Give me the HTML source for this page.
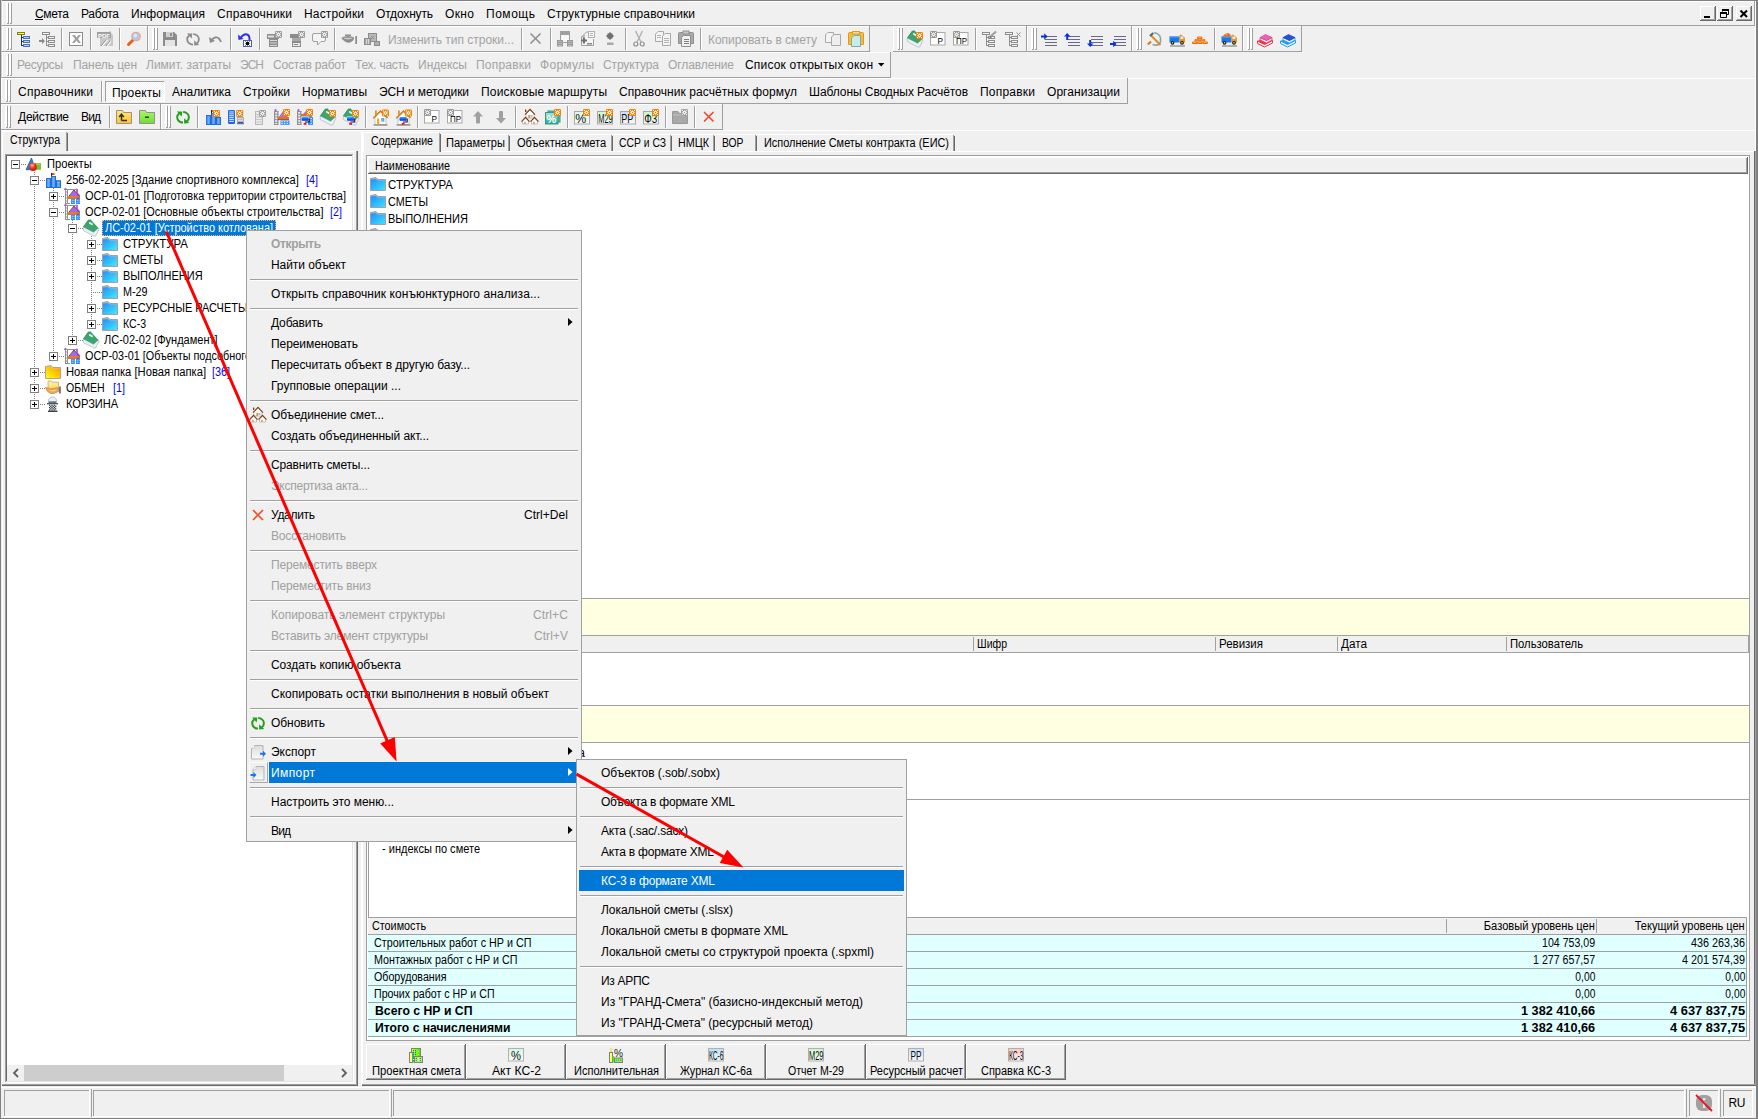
<!DOCTYPE html>
<html><head><meta charset="utf-8"><title>Smeta</title>
<style>
html,body{margin:0;padding:0;}
body{width:1758px;height:1119px;overflow:hidden;background:#f0f0f0;position:relative;font-family:"Liberation Sans",sans-serif;}
div{position:absolute;box-sizing:border-box;}
.t{white-space:nowrap;}
svg{position:absolute;overflow:visible;}
</style></head><body>
<div style="left:0px;top:0px;width:1758px;height:1px;background:#808080;"></div>
<div style="left:0px;top:0px;width:1px;height:1119px;background:#808080;"></div>
<div style="left:1px;top:0px;width:1px;height:78px;background:#cccccc;"></div>
<div style="left:2px;top:25px;width:1753px;height:1px;background:#a0a0a0;"></div>
<div style="left:2px;top:1px;width:1753px;height:1px;background:#ffffff;"></div>
<div style="left:2px;top:1px;width:1px;height:25px;background:#ffffff;"></div>
<div style="left:2px;top:25px;width:1753px;height:1px;background:#a0a0a0;"></div>
<div style="left:1754px;top:1px;width:1px;height:25px;background:#a0a0a0;"></div>
<div style="left:2px;top:26px;width:146px;height:1px;background:#ffffff;"></div>
<div style="left:2px;top:26px;width:1px;height:26px;background:#ffffff;"></div>
<div style="left:2px;top:51px;width:146px;height:1px;background:#a0a0a0;"></div>
<div style="left:147px;top:26px;width:1px;height:26px;background:#a0a0a0;"></div>
<div style="left:148px;top:26px;width:722px;height:1px;background:#ffffff;"></div>
<div style="left:148px;top:26px;width:1px;height:26px;background:#ffffff;"></div>
<div style="left:148px;top:51px;width:722px;height:1px;background:#a0a0a0;"></div>
<div style="left:869px;top:26px;width:1px;height:26px;background:#a0a0a0;"></div>
<div style="left:893px;top:26px;width:134px;height:1px;background:#ffffff;"></div>
<div style="left:893px;top:26px;width:1px;height:26px;background:#ffffff;"></div>
<div style="left:893px;top:51px;width:134px;height:1px;background:#a0a0a0;"></div>
<div style="left:1026px;top:26px;width:1px;height:26px;background:#a0a0a0;"></div>
<div style="left:1027px;top:26px;width:105px;height:1px;background:#ffffff;"></div>
<div style="left:1027px;top:26px;width:1px;height:26px;background:#ffffff;"></div>
<div style="left:1027px;top:51px;width:105px;height:1px;background:#a0a0a0;"></div>
<div style="left:1131px;top:26px;width:1px;height:26px;background:#a0a0a0;"></div>
<div style="left:1132px;top:26px;width:111px;height:1px;background:#ffffff;"></div>
<div style="left:1132px;top:26px;width:1px;height:26px;background:#ffffff;"></div>
<div style="left:1132px;top:51px;width:111px;height:1px;background:#a0a0a0;"></div>
<div style="left:1242px;top:26px;width:1px;height:26px;background:#a0a0a0;"></div>
<div style="left:1243px;top:26px;width:59px;height:1px;background:#ffffff;"></div>
<div style="left:1243px;top:26px;width:1px;height:26px;background:#ffffff;"></div>
<div style="left:1243px;top:51px;width:59px;height:1px;background:#a0a0a0;"></div>
<div style="left:1301px;top:26px;width:1px;height:26px;background:#a0a0a0;"></div>
<div style="left:2px;top:52px;width:889px;height:1px;background:#ffffff;"></div>
<div style="left:2px;top:52px;width:1px;height:26px;background:#ffffff;"></div>
<div style="left:2px;top:77px;width:889px;height:1px;background:#a0a0a0;"></div>
<div style="left:890px;top:52px;width:1px;height:26px;background:#a0a0a0;"></div>
<div style="left:1px;top:78px;width:1754px;height:1px;background:#ffffff;"></div>
<div style="left:1px;top:78px;width:1127px;height:1px;background:#ffffff;"></div>
<div style="left:1px;top:78px;width:1px;height:26px;background:#ffffff;"></div>
<div style="left:1px;top:103px;width:1127px;height:1px;background:#a0a0a0;"></div>
<div style="left:1127px;top:78px;width:1px;height:26px;background:#a0a0a0;"></div>
<div style="left:1px;top:104px;width:160px;height:1px;background:#ffffff;"></div>
<div style="left:1px;top:104px;width:1px;height:26px;background:#ffffff;"></div>
<div style="left:1px;top:129px;width:160px;height:1px;background:#a0a0a0;"></div>
<div style="left:160px;top:104px;width:1px;height:26px;background:#a0a0a0;"></div>
<div style="left:161px;top:104px;width:562px;height:1px;background:#ffffff;"></div>
<div style="left:161px;top:104px;width:1px;height:26px;background:#ffffff;"></div>
<div style="left:161px;top:129px;width:562px;height:1px;background:#a0a0a0;"></div>
<div style="left:722px;top:104px;width:1px;height:26px;background:#a0a0a0;"></div>
<div style="left:6px;top:3px;width:2px;height:21px;background:#ffffff;"></div>
<div style="left:8px;top:3px;width:1px;height:21px;background:#a0a0a0;"></div>
<div style="left:7px;top:23px;width:2px;height:1px;background:#a0a0a0;"></div>
<div style="left:9px;top:3px;width:2px;height:21px;background:#ffffff;"></div>
<div style="left:11px;top:3px;width:1px;height:21px;background:#a0a0a0;"></div>
<div style="left:10px;top:23px;width:2px;height:1px;background:#a0a0a0;"></div>
<div style="left:6px;top:28px;width:2px;height:22px;background:#ffffff;"></div>
<div style="left:8px;top:28px;width:1px;height:22px;background:#a0a0a0;"></div>
<div style="left:7px;top:49px;width:2px;height:1px;background:#a0a0a0;"></div>
<div style="left:9px;top:28px;width:2px;height:22px;background:#ffffff;"></div>
<div style="left:11px;top:28px;width:1px;height:22px;background:#a0a0a0;"></div>
<div style="left:10px;top:49px;width:2px;height:1px;background:#a0a0a0;"></div>
<div style="left:152px;top:28px;width:2px;height:22px;background:#ffffff;"></div>
<div style="left:154px;top:28px;width:1px;height:22px;background:#a0a0a0;"></div>
<div style="left:153px;top:49px;width:2px;height:1px;background:#a0a0a0;"></div>
<div style="left:155px;top:28px;width:2px;height:22px;background:#ffffff;"></div>
<div style="left:157px;top:28px;width:1px;height:22px;background:#a0a0a0;"></div>
<div style="left:156px;top:49px;width:2px;height:1px;background:#a0a0a0;"></div>
<div style="left:6px;top:54px;width:2px;height:22px;background:#ffffff;"></div>
<div style="left:8px;top:54px;width:1px;height:22px;background:#a0a0a0;"></div>
<div style="left:7px;top:75px;width:2px;height:1px;background:#a0a0a0;"></div>
<div style="left:9px;top:54px;width:2px;height:22px;background:#ffffff;"></div>
<div style="left:11px;top:54px;width:1px;height:22px;background:#a0a0a0;"></div>
<div style="left:10px;top:75px;width:2px;height:1px;background:#a0a0a0;"></div>
<div style="left:5px;top:80px;width:2px;height:22px;background:#ffffff;"></div>
<div style="left:7px;top:80px;width:1px;height:22px;background:#a0a0a0;"></div>
<div style="left:6px;top:101px;width:2px;height:1px;background:#a0a0a0;"></div>
<div style="left:8px;top:80px;width:2px;height:22px;background:#ffffff;"></div>
<div style="left:10px;top:80px;width:1px;height:22px;background:#a0a0a0;"></div>
<div style="left:9px;top:101px;width:2px;height:1px;background:#a0a0a0;"></div>
<div style="left:5px;top:106px;width:2px;height:22px;background:#ffffff;"></div>
<div style="left:7px;top:106px;width:1px;height:22px;background:#a0a0a0;"></div>
<div style="left:6px;top:127px;width:2px;height:1px;background:#a0a0a0;"></div>
<div style="left:8px;top:106px;width:2px;height:22px;background:#ffffff;"></div>
<div style="left:10px;top:106px;width:1px;height:22px;background:#a0a0a0;"></div>
<div style="left:9px;top:127px;width:2px;height:1px;background:#a0a0a0;"></div>
<div style="left:165px;top:106px;width:2px;height:22px;background:#ffffff;"></div>
<div style="left:167px;top:106px;width:1px;height:22px;background:#a0a0a0;"></div>
<div style="left:166px;top:127px;width:2px;height:1px;background:#a0a0a0;"></div>
<div style="left:168px;top:106px;width:2px;height:22px;background:#ffffff;"></div>
<div style="left:170px;top:106px;width:1px;height:22px;background:#a0a0a0;"></div>
<div style="left:169px;top:127px;width:2px;height:1px;background:#a0a0a0;"></div>
<div class="t" style="top:5.84px;font-size:12px;line-height:16px;color:#000;letter-spacing:-0.309px;left:35px;">Смета</div>
<div class="t" style="top:5.84px;font-size:12px;line-height:16px;color:#000;letter-spacing:-0.319px;left:81px;">Работа</div>
<div class="t" style="top:5.84px;font-size:12px;line-height:16px;color:#000;letter-spacing:0.059px;left:131px;">Информация</div>
<div class="t" style="top:5.84px;font-size:12px;line-height:16px;color:#000;letter-spacing:0.231px;left:217px;">Справочники</div>
<div class="t" style="top:5.84px;font-size:12px;line-height:16px;color:#000;letter-spacing:0.145px;left:304px;">Настройки</div>
<div class="t" style="top:5.84px;font-size:12px;line-height:16px;color:#000;letter-spacing:-0.168px;left:376px;">Отдохнуть</div>
<div class="t" style="top:5.84px;font-size:12px;line-height:16px;color:#000;letter-spacing:0.375px;left:445px;">Окно</div>
<div class="t" style="top:5.84px;font-size:12px;line-height:16px;color:#000;letter-spacing:0.531px;left:486px;">Помощь</div>
<div class="t" style="top:5.84px;font-size:12px;line-height:16px;color:#000;letter-spacing:0.112px;left:547px;">Структурные справочники</div>
<div style="left:35px;top:19px;width:8px;height:1px;background:#000;"></div>
<div class="t" style="top:56.84px;font-size:12px;line-height:16px;color:#a3a3a3;letter-spacing:-0.216px;left:17px;">Ресурсы</div>
<div class="t" style="top:56.84px;font-size:12px;line-height:16px;color:#a3a3a3;letter-spacing:-0.090px;left:73px;">Панель цен</div>
<div class="t" style="top:56.84px;font-size:12px;line-height:16px;color:#a3a3a3;letter-spacing:0.002px;left:146px;">Лимит. затраты</div>
<div class="t" style="top:56.84px;font-size:12px;line-height:16px;color:#a3a3a3;letter-spacing:-0.984px;left:240px;">ЭСН</div>
<div class="t" style="top:56.84px;font-size:12px;line-height:16px;color:#a3a3a3;letter-spacing:-0.200px;left:273px;">Состав работ</div>
<div class="t" style="top:56.84px;font-size:12px;line-height:16px;color:#a3a3a3;letter-spacing:-0.266px;left:355px;">Тех. часть</div>
<div class="t" style="top:56.84px;font-size:12px;line-height:16px;color:#a3a3a3;letter-spacing:0.010px;left:418px;">Индексы</div>
<div class="t" style="top:56.84px;font-size:12px;line-height:16px;color:#a3a3a3;letter-spacing:0.219px;left:476px;">Поправки</div>
<div class="t" style="top:56.84px;font-size:12px;line-height:16px;color:#a3a3a3;letter-spacing:0.297px;left:540px;">Формулы</div>
<div class="t" style="top:56.84px;font-size:12px;line-height:16px;color:#a3a3a3;letter-spacing:-0.117px;left:603px;">Структура</div>
<div class="t" style="top:56.84px;font-size:12px;line-height:16px;color:#a3a3a3;letter-spacing:-0.097px;left:668px;">Оглавление</div>
<div class="t" style="top:56.84px;font-size:12px;line-height:16px;color:#000;letter-spacing:0.183px;left:745px;">Список открытых окон</div>
<svg style="left:877.5px;top:63px" width="8" height="5" viewBox="0 0 8 5"><path d="M0 0 L6.4 0 L3.2 3.4 Z" fill="#000" stroke="none" stroke-width="1" /></svg>
<div style="left:105px;top:81px;width:60px;height:21px;background:repeating-conic-gradient(#ffffff 0 25%,#f0f0f0 0 50%) 0 0/2px 2px;border-top:1px solid #a0a0a0;border-left:1px solid #a0a0a0;border-right:1px solid #fff;border-bottom:1px solid #fff;"></div>
<div style="left:101px;top:81px;width:1px;height:21px;background:#a0a0a0;"></div>
<div style="left:102px;top:81px;width:1px;height:21px;background:#ffffff;"></div>
<div class="t" style="top:83.84px;font-size:12px;line-height:16px;color:#000;letter-spacing:0.231px;left:18px;">Справочники</div>
<div class="t" style="top:84.84px;font-size:12px;line-height:16px;color:#000;letter-spacing:0.141px;left:112px;">Проекты</div>
<div class="t" style="top:83.84px;font-size:12px;line-height:16px;color:#000;letter-spacing:-0.049px;left:172px;">Аналитика</div>
<div class="t" style="top:83.84px;font-size:12px;line-height:16px;color:#000;letter-spacing:0.138px;left:243px;">Стройки</div>
<div class="t" style="top:83.84px;font-size:12px;line-height:16px;color:#000;letter-spacing:0.141px;left:302px;">Нормативы</div>
<div class="t" style="top:83.84px;font-size:12px;line-height:16px;color:#000;letter-spacing:-0.099px;left:379px;">ЭСН и методики</div>
<div class="t" style="top:83.84px;font-size:12px;line-height:16px;color:#000;letter-spacing:0.180px;left:481px;">Поисковые маршруты</div>
<div class="t" style="top:83.84px;font-size:12px;line-height:16px;color:#000;letter-spacing:0.082px;left:619px;">Справочник расчётных формул</div>
<div class="t" style="top:83.84px;font-size:12px;line-height:16px;color:#000;letter-spacing:-0.077px;left:809px;">Шаблоны Сводных Расчётов</div>
<div class="t" style="top:83.84px;font-size:12px;line-height:16px;color:#000;letter-spacing:0.219px;left:980px;">Поправки</div>
<div class="t" style="top:83.84px;font-size:12px;line-height:16px;color:#000;letter-spacing:0.044px;left:1047px;">Организации</div>
<div class="t" style="top:108.84px;font-size:12px;line-height:16px;color:#000;letter-spacing:-0.250px;left:18px;">Действие</div>
<div class="t" style="top:108.84px;font-size:12px;line-height:16px;color:#000;letter-spacing:-0.852px;left:81px;">Вид</div>
<svg style="left:17px;top:32px" width="16" height="16" viewBox="0 0 16 16" shape-rendering="crispEdges"><rect x="0.5" y="0.5" width="7" height="2" fill="#ffff00" stroke="#808030" stroke-width="1"/><rect x="4" y="3" width="1" height="11" fill="#203060" /><rect x="5" y="5" width="1" height="1" fill="#203060" /><rect x="6.5" y="4.5" width="6" height="2" fill="#a8d0ff" stroke="#5070b0" stroke-width="1"/><rect x="5" y="9" width="1" height="1" fill="#203060" /><rect x="6.5" y="8.5" width="6" height="2" fill="#a8d0ff" stroke="#5070b0" stroke-width="1"/><rect x="5" y="13" width="1" height="1" fill="#203060" /><rect x="6.5" y="12.5" width="6" height="2" fill="#a8d0ff" stroke="#5070b0" stroke-width="1"/></svg>
<svg style="left:39px;top:32px" width="16" height="16" viewBox="0 0 16 16"><path d="M0 8 H3 V6 L6 9 L3 12 V10 H0 Z" fill="#8c8c8c" stroke="none" stroke-width="1" /><rect x="3.5" y="0.5" width="7" height="2" fill="#f4f4f4" stroke="#8c8c8c" stroke-width="1"/><rect x="7" y="3" width="1" height="11" fill="#8c8c8c" /><rect x="8" y="5" width="1" height="1" fill="#8c8c8c" /><rect x="9.5" y="4.5" width="6" height="2" fill="#f4f4f4" stroke="#8c8c8c" stroke-width="1"/><rect x="8" y="9" width="1" height="1" fill="#8c8c8c" /><rect x="9.5" y="8.5" width="6" height="2" fill="#f4f4f4" stroke="#8c8c8c" stroke-width="1"/><rect x="8" y="13" width="1" height="1" fill="#8c8c8c" /><rect x="9.5" y="12.5" width="6" height="2" fill="#f4f4f4" stroke="#8c8c8c" stroke-width="1"/></svg>
<div style="left:61px;top:28px;width:1px;height:22px;background:#a0a0a0;"></div>
<div style="left:62px;top:28px;width:1px;height:22px;background:#ffffff;"></div>
<svg style="left:69px;top:32px" width="16" height="16" viewBox="0 0 16 16"><rect x="0.5" y="0.5" width="13" height="13" fill="#fff" stroke="#8c8c8c" stroke-width="1"/><path d="M3 3 L6 3 L7.5 5.5 L9.5 3 L12 3 L9 7 L12 11 L9.5 11 L7.5 8.5 L5.5 11 L3 11 L6 7 Z" fill="#a0a0a0" stroke="none" stroke-width="1" /></svg>
<div style="left:90px;top:28px;width:1px;height:22px;background:#a0a0a0;"></div>
<div style="left:91px;top:28px;width:1px;height:22px;background:#ffffff;"></div>
<svg style="left:97px;top:31px" width="16" height="16" viewBox="0 0 16 16"><rect x="0" y="1" width="14" height="6" fill="#a0a0a0" /><path d="M14 1 L14 0 L12 0 L16 4 L16 15 L3 15 L3 7 L14 7 Z" fill="#c8c8c8" stroke="none" stroke-width="1" /><text x="1" y="6.5" font-family="Liberation Sans, sans-serif" font-size="6" fill="#fff" text-anchor="start" font-weight="bold" >PDF</text><path d="M4 15 L9 9 L11 9 L6 15 Z M9 15 L12 10 L14 10 L14 11 L11 15 Z" fill="#fff" stroke="none" stroke-width="1" /><path d="M4 15 L9 9 M9 15 L13 10" fill="none" stroke="#909090" stroke-width="1" /></svg>
<div style="left:119px;top:28px;width:1px;height:22px;background:#a0a0a0;"></div>
<div style="left:120px;top:28px;width:1px;height:22px;background:#ffffff;"></div>
<svg style="left:126px;top:31px" width="16" height="16" viewBox="0 0 16 16"><line x1="2.5" y1="13.5" x2="7" y2="9" stroke="#e0641a" stroke-width="3" stroke-linecap="round"/><circle cx="10" cy="5.5" r="4.2" fill="#b4c8f0" stroke="#eba58c" stroke-width="1.3"/><circle cx="9.3" cy="4.6" r="1.8" fill="#dce8ff" stroke="none" stroke-width="1"/></svg>
<svg style="left:163px;top:32px" width="16" height="16" viewBox="0 0 16 16"><path d="M0 0 H11 L14 3 V14 H0 Z" fill="#8c8c8c" stroke="none" stroke-width="1" /><rect x="3" y="0" width="7" height="5" fill="#d0d0d0" /><rect x="7" y="1" width="2" height="3" fill="#8c8c8c" /><rect x="2" y="8" width="10" height="6" fill="#e4e4e4" /></svg>
<svg style="left:186px;top:32.5px" width="14" height="13" viewBox="0 0 14 13"><path d="M7 11.6 C3.5 11.6 1.2 9 1.2 6.2 C1.2 4.6 2 3.2 3.4 2.2" fill="none" stroke="#8c8c8c" stroke-width="1.8" /><path d="M1 0.4 L6.3 0.4 L5.7 5.4 Z" fill="#8c8c8c" stroke="none" stroke-width="1" /><path d="M7.2 1.1 C10.5 1.1 12.9 3.5 12.9 6.2 C12.9 8 12.2 9.4 10.8 10.4" fill="none" stroke="#8c8c8c" stroke-width="1.8" /><path d="M8.1 7.2 L8.1 12.4 L13.3 12.1 Z" fill="#8c8c8c" stroke="none" stroke-width="1" /></svg>
<svg style="left:209px;top:33px" width="14" height="14" viewBox="0 0 14 14"><path d="M2.5 7.5 C5 3 10 3 12 9" fill="none" stroke="#8c8c8c" stroke-width="1.8" /><path d="M0 4 L1 10 L6 8 Z" fill="#8c8c8c" stroke="none" stroke-width="1" /></svg>
<div style="left:230px;top:28px;width:1px;height:22px;background:#a0a0a0;"></div>
<div style="left:231px;top:28px;width:1px;height:22px;background:#ffffff;"></div>
<svg style="left:238px;top:32px" width="15" height="16" viewBox="0 0 15 16"><path d="M3 5.5 C7 0 12 2 11.5 8" fill="none" stroke="#3030e8" stroke-width="2" /><path d="M0 2.5 L0.5 8 L5.5 7 Z" fill="#3030e8" stroke="none" stroke-width="1" /><rect x="5.5" y="8.5" width="8" height="6" fill="#fff" stroke="#5060b0" stroke-width="1"/><path d="M7.5 9.5 L11.5 13.5 M11.5 9.5 L7.5 13.5 M9.5 9.5 V13.5 M7.5 11.5 H11.5" fill="none" stroke="#000" stroke-width="1" /></svg>
<div style="left:259px;top:28px;width:1px;height:22px;background:#a0a0a0;"></div>
<div style="left:260px;top:28px;width:1px;height:22px;background:#ffffff;"></div>
<svg style="left:267px;top:31px" width="16" height="16" viewBox="0 0 16 16"><rect x="0" y="3" width="12" height="5" fill="#8c8c8c" /><rect x="1" y="4.5" width="6" height="2" fill="#e0e0e0" /><rect x="2" y="8" width="9" height="8" fill="#8c8c8c" /><rect x="3" y="9" width="7" height="1" fill="#d8d8d8" /><rect x="3" y="11.5" width="7" height="1" fill="#d8d8d8" /><rect x="3" y="14" width="7" height="1" fill="#d8d8d8" /><rect x="8" y="0" width="7" height="7" rx="1.2" fill="#9a9a9a"/><path d="M11.5 1.2 L13.8 3.5 L11.5 5.8 L9.2 3.5 Z" fill="#fff" stroke="none" stroke-width="1" /><circle cx="11.5" cy="3.5" r="0.75" fill="#9a9a9a" stroke="none" stroke-width="1"/><circle cx="13.6" cy="5.6" r="0.55" fill="#fff" stroke="none" stroke-width="1"/><circle cx="9.4" cy="5.6" r="0.55" fill="#fff" stroke="none" stroke-width="1"/><circle cx="13.6" cy="1.4" r="0.55" fill="#fff" stroke="none" stroke-width="1"/><circle cx="9.4" cy="1.4" r="0.55" fill="#fff" stroke="none" stroke-width="1"/></svg>
<svg style="left:290px;top:31px" width="16" height="16" viewBox="0 0 16 16"><rect x="0" y="3" width="12" height="4" fill="#8c8c8c" /><rect x="2" y="7" width="9" height="9" fill="#8c8c8c" /><rect x="2" y="7" width="9" height="3" fill="#a8a8a8" /><rect x="3" y="12" width="7" height="3" fill="#e8e8e8" /><rect x="4" y="13" width="4" height="1" fill="#8c8c8c" /><rect x="8" y="0" width="7" height="7" rx="1.2" fill="#9a9a9a"/><path d="M11.5 1.2 L13.8 3.5 L11.5 5.8 L9.2 3.5 Z" fill="#fff" stroke="none" stroke-width="1" /><circle cx="11.5" cy="3.5" r="0.75" fill="#9a9a9a" stroke="none" stroke-width="1"/><circle cx="13.6" cy="5.6" r="0.55" fill="#fff" stroke="none" stroke-width="1"/><circle cx="9.4" cy="5.6" r="0.55" fill="#fff" stroke="none" stroke-width="1"/><circle cx="13.6" cy="1.4" r="0.55" fill="#fff" stroke="none" stroke-width="1"/><circle cx="9.4" cy="1.4" r="0.55" fill="#fff" stroke="none" stroke-width="1"/></svg>
<svg style="left:312px;top:31px" width="16" height="16" viewBox="0 0 16 16"><path d="M2 2.5 H12 Q13.5 2.5 13.5 4 V9 Q13.5 10.5 12 10.5 H9 L5.5 14 V10.5 H2 Q0.5 10.5 0.5 9 V4 Q0.5 2.5 2 2.5 Z" fill="#f4f4f4" stroke="#a0a0a0" stroke-width="1" /><rect x="9" y="0" width="7" height="7" rx="1.2" fill="#9a9a9a"/><path d="M12.5 1.2 L14.8 3.5 L12.5 5.8 L10.2 3.5 Z" fill="#fff" stroke="none" stroke-width="1" /><circle cx="12.5" cy="3.5" r="0.75" fill="#9a9a9a" stroke="none" stroke-width="1"/><circle cx="14.6" cy="5.6" r="0.55" fill="#fff" stroke="none" stroke-width="1"/><circle cx="10.4" cy="5.6" r="0.55" fill="#fff" stroke="none" stroke-width="1"/><circle cx="14.6" cy="1.4" r="0.55" fill="#fff" stroke="none" stroke-width="1"/><circle cx="10.4" cy="1.4" r="0.55" fill="#fff" stroke="none" stroke-width="1"/></svg>
<div style="left:334px;top:28px;width:1px;height:22px;background:#a0a0a0;"></div>
<div style="left:335px;top:28px;width:1px;height:22px;background:#ffffff;"></div>
<svg style="left:341px;top:33px" width="16" height="13" viewBox="0 0 16 13"><path d="M0 5 Q8 14 13 6 L13 5 Q7 8 0 5 Z" fill="#8c8c8c" stroke="none" stroke-width="1" /><path d="M1 5 Q7 2 13 5 Q7 9 1 5 Z" fill="#c8c8c8" stroke="#8c8c8c" stroke-width="1" /><rect x="4" y="1.5" width="6" height="1.5" fill="#8c8c8c" /><rect x="2.5" y="3.5" width="9" height="1.5" fill="#9a9a9a" /><rect x="14.5" y="3" width="1.2" height="8" fill="#606060" /></svg>
<svg style="left:364px;top:33px" width="16" height="13" viewBox="0 0 16 13"><rect x="4.5" y="0.5" width="8" height="8" fill="#b8b8b8" stroke="#8c8c8c" stroke-width="1"/><rect x="0.5" y="5.5" width="6" height="6" fill="#a8a8a8" stroke="#8c8c8c" stroke-width="1"/><rect x="10.5" y="8.5" width="5" height="4" fill="#b0b0b0" stroke="#8c8c8c" stroke-width="1"/><path d="M7 3 L10 6 M10 3 L7 6" fill="none" stroke="#8c8c8c" stroke-width="1" /><rect x="2" y="6" width="1" height="5" fill="#d8d8d8" /><rect x="4" y="6" width="1" height="5" fill="#d8d8d8" /></svg>
<div class="t" style="top:31.84px;font-size:12px;line-height:16px;color:#a3a3a3;letter-spacing:-0.013px;left:388px;">Изменить тип строки...</div>
<div style="left:521px;top:28px;width:1px;height:22px;background:#a0a0a0;"></div>
<div style="left:522px;top:28px;width:1px;height:22px;background:#ffffff;"></div>
<svg style="left:530px;top:33px" width="11" height="11" viewBox="0 0 11 11"><path d="M0.5 0.5 L10.5 10.5 M10.5 0.5 L0.5 10.5" fill="none" stroke="#909090" stroke-width="1.6" /></svg>
<div style="left:550px;top:28px;width:1px;height:22px;background:#a0a0a0;"></div>
<div style="left:551px;top:28px;width:1px;height:22px;background:#ffffff;"></div>
<svg style="left:557px;top:31px" width="16" height="16" viewBox="0 0 16 16"><rect x="3.5" y="0.5" width="9" height="11" fill="#f4f4f4" stroke="#a0a0a0" stroke-width="1"/><rect x="4" y="1" width="8" height="3" fill="#a0a0a0" /><rect x="5" y="5" width="1.5" height="1.5" fill="#fff" /><rect x="7.5" y="5" width="1.5" height="1.5" fill="#fff" /><rect x="10" y="5" width="1.5" height="1.5" fill="#fff" /><rect x="5" y="7.5" width="1.5" height="1.5" fill="#fff" /><rect x="7.5" y="7.5" width="1.5" height="1.5" fill="#fff" /><rect x="10" y="7.5" width="1.5" height="1.5" fill="#fff" /><rect x="0.5" y="9.5" width="5" height="1.5" fill="#dcdcdc" stroke="#989898" stroke-width="1"/><rect x="0.5" y="11.5" width="5" height="1.5" fill="#dcdcdc" stroke="#989898" stroke-width="1"/><rect x="0.5" y="13.5" width="5" height="1.5" fill="#dcdcdc" stroke="#989898" stroke-width="1"/><rect x="10.5" y="9.5" width="5" height="1.5" fill="#dcdcdc" stroke="#989898" stroke-width="1"/><rect x="10.5" y="11.5" width="5" height="1.5" fill="#dcdcdc" stroke="#989898" stroke-width="1"/><rect x="10.5" y="13.5" width="5" height="1.5" fill="#dcdcdc" stroke="#989898" stroke-width="1"/></svg>
<svg style="left:581px;top:31px" width="16" height="16" viewBox="0 0 16 16"><path d="M3 3.5 L5.5 1 H9 V3 M0.5 6 L3 3.5 V6 Z M0.5 6 V14.5 H12.5 V8" fill="#f4f4f4" stroke="#a0a0a0" stroke-width="1" /><rect x="7.5" y="0.5" width="6" height="6" fill="#f8f8f8" stroke="#b0b0b0" stroke-width="1"/><rect x="9" y="2" width="3" height="1" fill="#b4b4b4" /><rect x="9" y="4" width="3" height="1" fill="#b4b4b4" /><path d="M0 9.5 H6 M3 6.5 V12.5" fill="none" stroke="#707070" stroke-width="2" /><rect x="6" y="12" width="5" height="1.6" fill="#909090" /></svg>
<svg style="left:606px;top:32px" width="9" height="14" viewBox="0 0 9 14"><path d="M4 0 L8 4 L4 8 L0 4 Z M1.5 1.5 L6.5 1.5 L6.5 6.5 L1.5 6.5Z" fill="#707070" stroke="none" stroke-width="1" /><rect x="1" y="10.5" width="6.5" height="2.5" fill="#a8a8a8" /></svg>
<div style="left:625px;top:28px;width:1px;height:22px;background:#a0a0a0;"></div>
<div style="left:626px;top:28px;width:1px;height:22px;background:#ffffff;"></div>
<svg style="left:633px;top:31px" width="12" height="16" viewBox="0 0 12 16"><path d="M2.5 0 L8 11 M9.5 0 L4 11" fill="none" stroke="#b0b0b0" stroke-width="1.4" /><circle cx="2.8" cy="13" r="2" fill="none" stroke="#909090" stroke-width="1.2"/><circle cx="9.2" cy="13" r="2" fill="none" stroke="#909090" stroke-width="1.2"/></svg>
<svg style="left:655px;top:31px" width="16" height="16" viewBox="0 0 16 16"><path d="M0.5 3 L3 0.5 H8.5 V10.5 H0.5 Z" fill="#f4f4f4" stroke="#a8a8a8" stroke-width="1" /><path d="M7.5 5 L10 2.5 H15.5 V14.5 H7.5 Z" fill="#f4f4f4" stroke="#a8a8a8" stroke-width="1" /><rect x="2" y="4" width="4" height="1" fill="#b4b4b4" /><rect x="2" y="6" width="4" height="1" fill="#b4b4b4" /><rect x="9" y="7" width="5" height="1" fill="#b4b4b4" /><rect x="9" y="9" width="5" height="1" fill="#b4b4b4" /><rect x="9" y="11" width="5" height="1" fill="#b4b4b4" /></svg>
<svg style="left:678px;top:31px" width="16" height="16" viewBox="0 0 16 16"><path d="M1.5 1.5 H14.5 Q15.5 1.5 15.5 2.5 V12.5 H0.5 V2.5 Q0.5 1.5 1.5 1.5 Z" fill="#a8a8a8" stroke="#909090" stroke-width="1" /><rect x="5" y="0" width="6" height="3" fill="#c8c8c8" stroke="#909090"/><path d="M3.5 6.5 L5.5 4.5 H12.5 V15.5 H3.5 Z" fill="#f0f0f0" stroke="#909090" stroke-width="1" /><rect x="6" y="8" width="5" height="1" fill="#808080" /><rect x="6" y="10" width="5" height="1" fill="#808080" /><rect x="6" y="12" width="5" height="1" fill="#808080" /></svg>
<div style="left:700px;top:28px;width:1px;height:22px;background:#a0a0a0;"></div>
<div style="left:701px;top:28px;width:1px;height:22px;background:#ffffff;"></div>
<div class="t" style="top:31.84px;font-size:12px;line-height:16px;color:#a3a3a3;letter-spacing:-0.047px;left:708px;">Копировать в смету</div>
<svg style="left:825px;top:32px" width="16" height="14" viewBox="0 0 16 14"><path d="M0.5 3 L3 0.5 H8.5 V10.5 H0.5 Z" fill="#f4f4f4" stroke="#a8a8a8" stroke-width="1" /><path d="M6.5 5 L9 2.5 H15.5 V13.5 H6.5 Z" fill="#eeeeee" stroke="#a8a8a8" stroke-width="1" /></svg>
<svg style="left:848px;top:31px" width="16" height="16" viewBox="0 0 16 16"><path d="M1.5 1.5 H14.5 Q15.5 1.5 15.5 2.5 V13.5 H0.5 V2.5 Q0.5 1.5 1.5 1.5 Z" fill="#fbbc30" stroke="#e09a10" stroke-width="1" /><rect x="4.5" y="0.5" width="7" height="2.5" fill="#fde090" stroke="#d8a020"/><path d="M3.5 7 L6 4.5 H12.5 V15.5 H3.5 Z" fill="#c8ecec" stroke="#80a8b0" stroke-width="1" /></svg>
<div style="left:897px;top:28px;width:2px;height:22px;background:#ffffff;"></div>
<div style="left:899px;top:28px;width:1px;height:22px;background:#a0a0a0;"></div>
<div style="left:898px;top:49px;width:2px;height:1px;background:#a0a0a0;"></div>
<div style="left:900px;top:28px;width:2px;height:22px;background:#ffffff;"></div>
<div style="left:902px;top:28px;width:1px;height:22px;background:#a0a0a0;"></div>
<div style="left:901px;top:49px;width:2px;height:1px;background:#a0a0a0;"></div>
<div style="left:1031px;top:28px;width:2px;height:22px;background:#ffffff;"></div>
<div style="left:1033px;top:28px;width:1px;height:22px;background:#a0a0a0;"></div>
<div style="left:1032px;top:49px;width:2px;height:1px;background:#a0a0a0;"></div>
<div style="left:1034px;top:28px;width:2px;height:22px;background:#ffffff;"></div>
<div style="left:1036px;top:28px;width:1px;height:22px;background:#a0a0a0;"></div>
<div style="left:1035px;top:49px;width:2px;height:1px;background:#a0a0a0;"></div>
<div style="left:1136px;top:28px;width:2px;height:22px;background:#ffffff;"></div>
<div style="left:1138px;top:28px;width:1px;height:22px;background:#a0a0a0;"></div>
<div style="left:1137px;top:49px;width:2px;height:1px;background:#a0a0a0;"></div>
<div style="left:1139px;top:28px;width:2px;height:22px;background:#ffffff;"></div>
<div style="left:1141px;top:28px;width:1px;height:22px;background:#a0a0a0;"></div>
<div style="left:1140px;top:49px;width:2px;height:1px;background:#a0a0a0;"></div>
<div style="left:1247px;top:28px;width:2px;height:22px;background:#ffffff;"></div>
<div style="left:1249px;top:28px;width:1px;height:22px;background:#a0a0a0;"></div>
<div style="left:1248px;top:49px;width:2px;height:1px;background:#a0a0a0;"></div>
<div style="left:1250px;top:28px;width:2px;height:22px;background:#ffffff;"></div>
<div style="left:1252px;top:28px;width:1px;height:22px;background:#a0a0a0;"></div>
<div style="left:1251px;top:49px;width:2px;height:1px;background:#a0a0a0;"></div>
<svg style="left:907px;top:31px" width="16" height="16" viewBox="0 0 16 16"><path d="M0.3 7 L0.3 10.5 L10.8 16 L12.6 16 L15.8 9.6 L15.5 8 L10.5 12.3 Z" fill="#eceff6" stroke="#a8b4c8" stroke-width="0.7" /><path d="M0.3 7 L5.3 0 L8 0 L15.5 8 L10.5 12.3 Z" fill="#3ca46c" stroke="none" stroke-width="1" /><path d="M0.3 7 L5.3 0 L8 0" fill="none" stroke="#2c8c58" stroke-width="0.8" /><path d="M6.8 3 L9 4.3" fill="none" stroke="#e8fff4" stroke-width="1.7" stroke-linecap="round"/><rect x="9" y="1" width="7" height="7" rx="1.2" fill="#f08000"/><path d="M12.5 2.2 L14.8 4.5 L12.5 6.8 L10.2 4.5 Z" fill="#fff" stroke="none" stroke-width="1" /><circle cx="12.5" cy="4.5" r="0.75" fill="#f08000" stroke="none" stroke-width="1"/><circle cx="14.6" cy="6.6" r="0.55" fill="#fff" stroke="none" stroke-width="1"/><circle cx="10.4" cy="6.6" r="0.55" fill="#fff" stroke="none" stroke-width="1"/><circle cx="14.6" cy="2.4" r="0.55" fill="#fff" stroke="none" stroke-width="1"/><circle cx="10.4" cy="2.4" r="0.55" fill="#fff" stroke="none" stroke-width="1"/></svg>
<svg style="left:930px;top:31px" width="16" height="16" viewBox="0 0 16 16"><rect x="0.5" y="1.5" width="14.5" height="12.5" fill="#fff" stroke="#a8a8a8" stroke-width="1"/><rect x="0" y="0" width="7" height="7" rx="1.2" fill="#969696"/><path d="M3.5 1.2 L5.8 3.5 L3.5 5.8 L1.2 3.5 Z" fill="#fff" stroke="none" stroke-width="1" /><circle cx="3.5" cy="3.5" r="0.75" fill="#969696" stroke="none" stroke-width="1"/><circle cx="5.6" cy="5.6" r="0.55" fill="#fff" stroke="none" stroke-width="1"/><circle cx="1.4" cy="5.6" r="0.55" fill="#fff" stroke="none" stroke-width="1"/><circle cx="5.6" cy="1.4" r="0.55" fill="#fff" stroke="none" stroke-width="1"/><circle cx="1.4" cy="1.4" r="0.55" fill="#fff" stroke="none" stroke-width="1"/><text x="7.5" y="13" font-family="Liberation Sans, sans-serif" font-size="8.5" fill="#000" text-anchor="start" textLength="5.5" lengthAdjust="spacingAndGlyphs">P</text></svg>
<svg style="left:953px;top:31px" width="16" height="16" viewBox="0 0 16 16"><rect x="0.5" y="1.5" width="14.5" height="12.5" fill="#fff" stroke="#a8a8a8" stroke-width="1"/><rect x="0" y="0" width="7" height="7" rx="1.2" fill="#969696"/><path d="M3.5 1.2 L5.8 3.5 L3.5 5.8 L1.2 3.5 Z" fill="#fff" stroke="none" stroke-width="1" /><circle cx="3.5" cy="3.5" r="0.75" fill="#969696" stroke="none" stroke-width="1"/><circle cx="5.6" cy="5.6" r="0.55" fill="#fff" stroke="none" stroke-width="1"/><circle cx="1.4" cy="5.6" r="0.55" fill="#fff" stroke="none" stroke-width="1"/><circle cx="5.6" cy="1.4" r="0.55" fill="#fff" stroke="none" stroke-width="1"/><circle cx="1.4" cy="1.4" r="0.55" fill="#fff" stroke="none" stroke-width="1"/><text x="3" y="13" font-family="Liberation Sans, sans-serif" font-size="8.5" fill="#000" text-anchor="start" textLength="11" lengthAdjust="spacingAndGlyphs">ПР</text></svg>
<div style="left:975px;top:28px;width:1px;height:22px;background:#a0a0a0;"></div>
<div style="left:976px;top:28px;width:1px;height:22px;background:#ffffff;"></div>
<svg style="left:982px;top:31px" width="16" height="16" viewBox="0 0 16 16"><rect x="0.5" y="1.5" width="7" height="2" fill="#f4f4f4" stroke="#8c8c8c" stroke-width="1"/><rect x="4" y="4" width="1" height="11" fill="#8c8c8c" /><rect x="5" y="6" width="1" height="1" fill="#8c8c8c" /><rect x="6.5" y="5.5" width="6" height="2" fill="#f4f4f4" stroke="#8c8c8c" stroke-width="1"/><rect x="5" y="10" width="1" height="1" fill="#8c8c8c" /><rect x="6.5" y="9.5" width="6" height="2" fill="#f4f4f4" stroke="#8c8c8c" stroke-width="1"/><rect x="5" y="14" width="1" height="1" fill="#8c8c8c" /><rect x="6.5" y="13.5" width="6" height="2" fill="#f4f4f4" stroke="#8c8c8c" stroke-width="1"/><path d="M8 6 L14 0.5" fill="none" stroke="#a0a0a0" stroke-width="2.2" /><path d="M7 7.5 L8.5 5 L10 6.5 Z" fill="#707070" stroke="none" stroke-width="1" /></svg>
<svg style="left:1005px;top:31px" width="16" height="16" viewBox="0 0 16 16"><rect x="0.5" y="1.5" width="7" height="2" fill="#f4f4f4" stroke="#8c8c8c" stroke-width="1"/><rect x="4" y="4" width="1" height="11" fill="#8c8c8c" /><rect x="5" y="6" width="1" height="1" fill="#8c8c8c" /><rect x="6.5" y="5.5" width="6" height="2" fill="#f4f4f4" stroke="#8c8c8c" stroke-width="1"/><rect x="5" y="10" width="1" height="1" fill="#8c8c8c" /><rect x="6.5" y="9.5" width="6" height="2" fill="#f4f4f4" stroke="#8c8c8c" stroke-width="1"/><rect x="5" y="14" width="1" height="1" fill="#8c8c8c" /><rect x="6.5" y="13.5" width="6" height="2" fill="#f4f4f4" stroke="#8c8c8c" stroke-width="1"/><path d="M11.5 1.5 L15.5 5.5 M15.5 1.5 L11.5 5.5" fill="none" stroke="#909090" stroke-width="1" /></svg>
<svg style="left:1041px;top:31px" width="16" height="16" viewBox="0 0 16 16"><rect x="4" y="5" width="12" height="1" fill="#686888" /><rect x="4" y="8" width="12" height="1" fill="#686888" /><rect x="4" y="11" width="12" height="1" fill="#686888" /><rect x="4" y="14" width="12" height="1" fill="#686888" /><path d="M0 4.5 h3.2 v-2.2 l3.4 3.2 l-3.4 3.2 v-2.2 h-3.2 Z" fill="#0a32e0" stroke="none" stroke-width="1" /></svg>
<svg style="left:1064px;top:31px" width="16" height="16" viewBox="0 0 16 16"><rect x="4" y="5" width="12" height="1" fill="#686888" /><rect x="4" y="8" width="12" height="1" fill="#686888" /><rect x="4" y="11" width="12" height="1" fill="#686888" /><rect x="4" y="14" width="12" height="1" fill="#686888" /><path d="M2.2 9 v-3.6 h-2.2 l3.2 -3.4 l3.2 3.4 h-2.2 v3.6 Z" fill="#0a32e0" stroke="none" stroke-width="1" /></svg>
<svg style="left:1087px;top:31px" width="16" height="16" viewBox="0 0 16 16"><rect x="4" y="5" width="12" height="1" fill="#686888" /><rect x="4" y="8" width="12" height="1" fill="#686888" /><rect x="4" y="11" width="12" height="1" fill="#686888" /><rect x="4" y="14" width="12" height="1" fill="#686888" /><path d="M2.2 9 v3.6 h-2.2 l3.2 3.4 l3.2 -3.4 h-2.2 v-3.6 Z" fill="#0a32e0" stroke="none" stroke-width="1" /></svg>
<svg style="left:1110px;top:31px" width="16" height="16" viewBox="0 0 16 16"><rect x="4" y="5" width="12" height="1" fill="#686888" /><rect x="4" y="8" width="12" height="1" fill="#686888" /><rect x="4" y="11" width="12" height="1" fill="#686888" /><rect x="4" y="14" width="12" height="1" fill="#686888" /><path d="M0 12 h3.2 v-2.2 l3.4 3.2 l-3.4 3.2 v-2.2 h-3.2 Z" fill="#0a32e0" stroke="none" stroke-width="1" /></svg>
<svg style="left:1147px;top:31px" width="16" height="16" viewBox="0 0 16 16"><path d="M7 1.5 Q15 3 13.5 11 Q12 15.5 5.5 13.5" fill="none" stroke="#88a8a8" stroke-width="1.6" /><path d="M3.5 4 L13.5 14" fill="none" stroke="#e08828" stroke-width="2" /><path d="M2.2 4.2 L5.5 1.2 L7 2.8 L3.8 5.8 Z" fill="#58686c" stroke="none" stroke-width="1" /><path d="M0.8 13.5 L4 10.5" fill="none" stroke="#d87818" stroke-width="2.2" /></svg>
<svg style="left:1169px;top:31px" width="16" height="16" viewBox="0 0 16 16"><rect x="0.5" y="5.5" width="10" height="6" fill="#1a78e8" /><rect x="0.5" y="5.5" width="10" height="1.2" fill="#4a9cf8" /><path d="M10.5 4.5 L11.5 3.5 L14 5 L16 7 L16 11.5 L10.5 11.5 Z" fill="#f09020" stroke="none" stroke-width="1" /><rect x="11.5" y="5.5" width="2.8" height="2.6" fill="#e0f4f8" /><circle cx="3.5" cy="11.8" r="1.9" fill="#181818" stroke="none" stroke-width="1"/><circle cx="3.5" cy="11.8" r="0.8" fill="#f8e860" stroke="none" stroke-width="1"/><circle cx="13" cy="11.8" r="1.9" fill="#181818" stroke="none" stroke-width="1"/><circle cx="13" cy="11.8" r="0.8" fill="#f8e860" stroke="none" stroke-width="1"/><rect x="1" y="14.5" width="15" height="1" fill="#707070" /></svg>
<svg style="left:1192px;top:31px" width="16" height="16" viewBox="0 0 16 16"><rect x="5" y="5.5" width="5.4" height="2.6" rx="1.2" fill="#f06c00"/><rect x="6.2" y="6.1" width="3" height=".8" fill="#ffb868"/><rect x="2.5" y="8" width="5.4" height="2.6" rx="1.2" fill="#f06c00"/><rect x="3.7" y="8.6" width="3" height=".8" fill="#ffb868"/><rect x="8" y="8" width="5.4" height="2.6" rx="1.2" fill="#f06c00"/><rect x="9.2" y="8.6" width="3" height=".8" fill="#ffb868"/><rect x="0" y="10.5" width="5.4" height="2.6" rx="1.2" fill="#f06c00"/><rect x="1.2" y="11.1" width="3" height=".8" fill="#ffb868"/><rect x="5.2" y="10.5" width="5.4" height="2.6" rx="1.2" fill="#f06c00"/><rect x="6.4" y="11.1" width="3" height=".8" fill="#ffb868"/><rect x="10.5" y="10.5" width="5.4" height="2.6" rx="1.2" fill="#f06c00"/><rect x="11.7" y="11.1" width="3" height=".8" fill="#ffb868"/></svg>
<div style="left:1214px;top:28px;width:1px;height:22px;background:#a0a0a0;"></div>
<div style="left:1215px;top:28px;width:1px;height:22px;background:#ffffff;"></div>
<svg style="left:1221px;top:31px" width="16" height="16" viewBox="0 0 16 16"><rect x="0.5" y="5.5" width="10" height="6" fill="#1a78e8" /><rect x="0.5" y="5.5" width="10" height="1.2" fill="#4a9cf8" /><path d="M10.5 4.5 L11.5 3.5 L14 5 L16 7 L16 11.5 L10.5 11.5 Z" fill="#f09020" stroke="none" stroke-width="1" /><rect x="11.5" y="5.5" width="2.8" height="2.6" fill="#e0f4f8" /><circle cx="3.5" cy="11.8" r="1.9" fill="#181818" stroke="none" stroke-width="1"/><circle cx="3.5" cy="11.8" r="0.8" fill="#f8e860" stroke="none" stroke-width="1"/><circle cx="13" cy="11.8" r="1.9" fill="#181818" stroke="none" stroke-width="1"/><circle cx="13" cy="11.8" r="0.8" fill="#f8e860" stroke="none" stroke-width="1"/><rect x="1" y="14.5" width="15" height="1" fill="#707070" /><path d="M1.5 5.5 L4 3 L7 2 L9.5 3.5 L9.5 5.5 Z" fill="#e86810" stroke="none" stroke-width="1" /><rect x="4.5" y="3.2" width="2" height="1" fill="#ffb060" /></svg>
<svg style="left:1257px;top:32px" width="16" height="15" viewBox="0 0 16 15"><path d="M0.5 9 L7.5 12.5 L15.5 8.5 L15.5 11 L7.5 15 L0.5 11.5 Z" fill="#f4f4f8" stroke="#f03048" stroke-width="1" /><path d="M3 5.5 L9.5 8.5 L15 5.5 L15 8 L9.5 11 L3 8 Z" fill="#f4f4f8" stroke="#f03048" stroke-width="0.8" /><path d="M3 5.5 L8.5 2.5 L15 5.5 L9.5 8.5 Z" fill="#f060b8" stroke="#d04090" stroke-width="0.6" /><path d="M0.5 9 L3 7.8 L3 8 L9.5 11 L15 8.2 L15.5 8.5 L7.5 12.5 Z" fill="#f03048" stroke="none" stroke-width="1" /></svg>
<svg style="left:1280px;top:32px" width="16" height="15" viewBox="0 0 16 15"><path d="M0.5 9 L7.5 12.5 L15.5 8.5 L15.5 11 L7.5 15 L0.5 11.5 Z" fill="#f4f4f8" stroke="#18a0f0" stroke-width="1" /><path d="M3 5.5 L9.5 8.5 L15 5.5 L15 8 L9.5 11 L3 8 Z" fill="#f4f4f8" stroke="#18a0f0" stroke-width="0.8" /><path d="M3 5.5 L8.5 2.5 L15 5.5 L9.5 8.5 Z" fill="#2850d8" stroke="#1838b0" stroke-width="0.6" /><path d="M0.5 9 L3 7.8 L3 8 L9.5 11 L15 8.2 L15.5 8.5 L7.5 12.5 Z" fill="#18a0f0" stroke="none" stroke-width="1" /></svg>
<div style="left:109px;top:106px;width:1px;height:22px;background:#a0a0a0;"></div>
<div style="left:110px;top:106px;width:1px;height:22px;background:#ffffff;"></div>
<svg style="left:116px;top:110px" width="16" height="14" viewBox="0 0 16 14"><defs><linearGradient id="gffe680" x1="0" y1="0" x2="0" y2="1"><stop offset="0" stop-color="#ffe680"/><stop offset="1" stop-color="#ffc428"/></linearGradient></defs><path d="M0.5 0.5 H6.5 L7.5 2.5 H15.5 V13.5 H0.5 Z" fill="url(#gffe680)" stroke="#a09080" stroke-width="1" /><path d="M5.5 10.5 V5 M3.2 7 L5.5 4.2 L7.8 7 M5.5 10.5 H11" fill="none" stroke="#303030" stroke-width="1.5" /></svg>
<svg style="left:139px;top:110px" width="16" height="14" viewBox="0 0 16 14"><defs><linearGradient id="ga8f868" x1="0" y1="0" x2="0" y2="1"><stop offset="0" stop-color="#a8f868"/><stop offset="1" stop-color="#6ce030"/></linearGradient></defs><path d="M0.5 0.5 H6.5 L7.5 2.5 H15.5 V13.5 H0.5 Z" fill="url(#ga8f868)" stroke="#a08898" stroke-width="1" /><rect x="6" y="6.5" width="4" height="1.4" fill="#303030" /></svg>
<svg style="left:176px;top:110.6px" width="14" height="13" viewBox="0 0 14 13"><path d="M7 11.6 C3.5 11.6 1.2 9 1.2 6.2 C1.2 4.6 2 3.2 3.4 2.2" fill="none" stroke="#22a018" stroke-width="2" /><path d="M1 0.4 L6.3 0.4 L5.7 5.4 Z" fill="#22a018" stroke="none" stroke-width="1" /><path d="M7.2 1.1 C10.5 1.1 12.9 3.5 12.9 6.2 C12.9 8 12.2 9.4 10.8 10.4" fill="none" stroke="#22a018" stroke-width="2" /><path d="M8.1 7.2 L8.1 12.4 L13.3 12.1 Z" fill="#22a018" stroke="none" stroke-width="1" /></svg>
<div style="left:197px;top:106px;width:1px;height:22px;background:#a0a0a0;"></div>
<div style="left:198px;top:106px;width:1px;height:22px;background:#ffffff;"></div>
<svg style="left:206px;top:110px" width="16" height="16" viewBox="0 0 16 16"><rect x="0" y="5" width="5" height="10" fill="#1a70e0" /><rect x="5" y="3" width="5" height="12" fill="#1a70e0" /><rect x="10" y="7" width="5" height="8" fill="#1a70e0" /><rect x="1.2" y="6.5" width="2.6" height="1" fill="#c8dcff" /><rect x="1.2" y="8.5" width="2.6" height="1" fill="#c8dcff" /><rect x="1.2" y="10.5" width="2.6" height="1" fill="#c8dcff" /><rect x="1.2" y="12.5" width="2.6" height="1" fill="#c8dcff" /><rect x="11.2" y="8.5" width="2.6" height="1" fill="#c8dcff" /><rect x="11.2" y="10.5" width="2.6" height="1" fill="#c8dcff" /><rect x="11.2" y="12.5" width="2.6" height="1" fill="#c8dcff" /><rect x="6.2" y="4.5" width="2.6" height="1" fill="#c8dcff" /><rect x="6.2" y="6.5" width="2.6" height="1" fill="#c8dcff" /><rect x="6.2" y="8.5" width="2.6" height="1" fill="#c8dcff" /><rect x="6.2" y="10.5" width="2.6" height="1" fill="#c8dcff" /><rect x="6.2" y="12.5" width="2.6" height="1" fill="#c8dcff" /><rect x="5" y="0" width="1" height="3.4" fill="#202020" /><path d="M6 0 L7.6 0.9 L6 2 Z" fill="#f02020" stroke="none" stroke-width="1" /><rect x="7" y="0" width="7" height="7" rx="1.2" fill="#f08000"/><path d="M10.5 1.2 L12.8 3.5 L10.5 5.8 L8.2 3.5 Z" fill="#fff" stroke="none" stroke-width="1" /><circle cx="10.5" cy="3.5" r="0.75" fill="#f08000" stroke="none" stroke-width="1"/><circle cx="12.6" cy="5.6" r="0.55" fill="#fff" stroke="none" stroke-width="1"/><circle cx="8.4" cy="5.6" r="0.55" fill="#fff" stroke="none" stroke-width="1"/><circle cx="12.6" cy="1.4" r="0.55" fill="#fff" stroke="none" stroke-width="1"/><circle cx="8.4" cy="1.4" r="0.55" fill="#fff" stroke="none" stroke-width="1"/></svg>
<svg style="left:228px;top:110px" width="16" height="16" viewBox="0 0 16 16"><rect x="0" y="0" width="7" height="14" rx="1" fill="#1a70e0"/><rect x="1.2" y="1.4" width="4.6" height="1.1" fill="#d8dcff" /><rect x="1.2" y="3.3" width="4.6" height="1.1" fill="#d8dcff" /><rect x="1.2" y="5.2" width="4.6" height="1.1" fill="#d8dcff" /><rect x="1.2" y="7.1" width="4.6" height="1.1" fill="#d8dcff" /><rect x="1.2" y="9" width="4.6" height="1.1" fill="#d8dcff" /><rect x="1.2" y="10.9" width="4.6" height="1.1" fill="#d8dcff" /><rect x="1.6" y="12.5" width="3.8" height="0.9" fill="#3848e0" /><rect x="9" y="7" width="7" height="6.5" fill="#a8b0c0" /><rect x="10" y="8.3" width="5" height="1" fill="#e0e4f4" /><rect x="10" y="10.2" width="5" height="1" fill="#e0e4f4" /><rect x="10" y="12" width="5" height="1" fill="#2848e0" /><rect x="9" y="13.3" width="7" height="0.9" fill="#505050" /><rect x="8.2" y="0" width="7" height="7" rx="1.2" fill="#f08000"/><path d="M11.7 1.2 L14 3.5 L11.7 5.8 L9.4 3.5 Z" fill="#fff" stroke="none" stroke-width="1" /><circle cx="11.7" cy="3.5" r="0.75" fill="#f08000" stroke="none" stroke-width="1"/><circle cx="13.8" cy="5.6" r="0.55" fill="#fff" stroke="none" stroke-width="1"/><circle cx="9.6" cy="5.6" r="0.55" fill="#fff" stroke="none" stroke-width="1"/><circle cx="13.8" cy="1.4" r="0.55" fill="#fff" stroke="none" stroke-width="1"/><circle cx="9.6" cy="1.4" r="0.55" fill="#fff" stroke="none" stroke-width="1"/></svg>
<svg style="left:255px;top:110px" width="16" height="16" viewBox="0 0 16 16"><rect x="0.5" y="1.5" width="7" height="13" fill="#e8e8e8" stroke="#b8b8b8" stroke-width="1"/><rect x="1" y="4" width="6" height="1" fill="#c8c8c8" /><rect x="1" y="6.5" width="6" height="1" fill="#c8c8c8" /><rect x="1" y="9" width="6" height="1" fill="#c8c8c8" /><rect x="1" y="11.5" width="6" height="1" fill="#c8c8c8" /><rect x="4" y="0" width="7" height="7" rx="1.2" fill="#a0a0a0"/><path d="M7.5 1.2 L9.8 3.5 L7.5 5.8 L5.2 3.5 Z" fill="#fff" stroke="none" stroke-width="1" /><circle cx="7.5" cy="3.5" r="0.75" fill="#a0a0a0" stroke="none" stroke-width="1"/><circle cx="9.6" cy="5.6" r="0.55" fill="#fff" stroke="none" stroke-width="1"/><circle cx="5.4" cy="5.6" r="0.55" fill="#fff" stroke="none" stroke-width="1"/><circle cx="9.6" cy="1.4" r="0.55" fill="#fff" stroke="none" stroke-width="1"/><circle cx="5.4" cy="1.4" r="0.55" fill="#fff" stroke="none" stroke-width="1"/></svg>
<svg style="left:274px;top:109px" width="16" height="17" viewBox="0 0 16 17"><rect x="0" y="2" width="1.2" height="14" fill="#909090" /><rect x="3.2" y="2" width="1.2" height="14" fill="#909090" /><rect x="0" y="2" width="4.4" height="1" fill="#909090" /><rect x="0" y="4.7" width="4.4" height="1" fill="#909090" /><rect x="0" y="7.4" width="4.4" height="1" fill="#909090" /><rect x="0" y="10.1" width="4.4" height="1" fill="#909090" /><rect x="0" y="12.8" width="4.4" height="1" fill="#909090" /><rect x="0" y="15" width="4.4" height="1" fill="#909090" /><circle cx="1.5" cy="1.2" r="1.1" fill="#a060e8" stroke="none" stroke-width="1"/><path d="M10 1.5 L4.5 9 L14 9 Z" fill="#b070e8" stroke="#8040c8" stroke-width="0.6" /><rect x="4" y="8" width="11" height="2.2" fill="#f07010" /><rect x="4" y="10.2" width="11" height="0.9" fill="#983c08" /><rect x="6.5" y="11.5" width="9" height="4.5" fill="#3a92f8" /><rect x="7.3" y="12.2" width="1.5" height="1.1" fill="#d8ecff" /><rect x="7.3" y="14.1" width="1.5" height="1.1" fill="#d8ecff" /><rect x="9.8" y="12.2" width="1.5" height="1.1" fill="#d8ecff" /><rect x="9.8" y="14.1" width="1.5" height="1.1" fill="#d8ecff" /><rect x="12.6" y="12.2" width="1.5" height="1.1" fill="#d8ecff" /><rect x="12.6" y="14.1" width="1.5" height="1.1" fill="#d8ecff" /><rect x="9" y="0" width="7" height="7" rx="1.2" fill="#f08000"/><path d="M12.5 1.2 L14.8 3.5 L12.5 5.8 L10.2 3.5 Z" fill="#fff" stroke="none" stroke-width="1" /><circle cx="12.5" cy="3.5" r="0.75" fill="#f08000" stroke="none" stroke-width="1"/><circle cx="14.6" cy="5.6" r="0.55" fill="#fff" stroke="none" stroke-width="1"/><circle cx="10.4" cy="5.6" r="0.55" fill="#fff" stroke="none" stroke-width="1"/><circle cx="14.6" cy="1.4" r="0.55" fill="#fff" stroke="none" stroke-width="1"/><circle cx="10.4" cy="1.4" r="0.55" fill="#fff" stroke="none" stroke-width="1"/></svg>
<svg style="left:297px;top:109px" width="16" height="17" viewBox="0 0 16 17"><rect x="0" y="2" width="1.2" height="14" fill="#909090" /><rect x="3.2" y="2" width="1.2" height="14" fill="#909090" /><rect x="0" y="2" width="4.4" height="1" fill="#909090" /><rect x="0" y="4.7" width="4.4" height="1" fill="#909090" /><rect x="0" y="7.4" width="4.4" height="1" fill="#909090" /><rect x="0" y="10.1" width="4.4" height="1" fill="#909090" /><rect x="0" y="12.8" width="4.4" height="1" fill="#909090" /><rect x="0" y="15" width="4.4" height="1" fill="#909090" /><circle cx="1.5" cy="1.2" r="1.1" fill="#a060e8" stroke="none" stroke-width="1"/><path d="M10 1.5 L5.5 6 L14 6 Z" fill="#b070e8" stroke="#8040c8" stroke-width="0.6" /><rect x="4" y="5" width="11" height="1.8" fill="#f07010" /><rect x="4" y="6.8" width="11" height="0.8" fill="#983c08" /><rect x="11" y="8" width="5" height="8" fill="#3a92f8" /><rect x="13.5" y="9" width="1.4" height="1.1" fill="#d8ecff" /><rect x="13.5" y="11.5" width="1.4" height="1.1" fill="#d8ecff" /><rect x="13.5" y="14" width="1.4" height="1.1" fill="#d8ecff" /><defs><linearGradient id="rl" x1="0" y1="0" x2="0" y2="1"><stop offset="0" stop-color="#28b4ff"/><stop offset="1" stop-color="#0018ff"/></linearGradient></defs><rect x="4" y="7.5" width="8.2" height="4.8" rx="1" fill="#f8fcff"/><rect x="4.5" y="8" width="7.2" height="3.8" rx=".8" fill="url(#rl)"/><path d="M12.2 9.6 v3.4 h-4.2" fill="none" stroke="#181818" stroke-width="1.1" /><rect x="6.7" y="13.8" width="2.8" height="2" fill="#f01818" /><rect x="9" y="0" width="7" height="7" rx="1.2" fill="#f08000"/><path d="M12.5 1.2 L14.8 3.5 L12.5 5.8 L10.2 3.5 Z" fill="#fff" stroke="none" stroke-width="1" /><circle cx="12.5" cy="3.5" r="0.75" fill="#f08000" stroke="none" stroke-width="1"/><circle cx="14.6" cy="5.6" r="0.55" fill="#fff" stroke="none" stroke-width="1"/><circle cx="10.4" cy="5.6" r="0.55" fill="#fff" stroke="none" stroke-width="1"/><circle cx="14.6" cy="1.4" r="0.55" fill="#fff" stroke="none" stroke-width="1"/><circle cx="10.4" cy="1.4" r="0.55" fill="#fff" stroke="none" stroke-width="1"/></svg>
<svg style="left:320px;top:109px" width="16" height="17" viewBox="0 0 16 17"><path d="M0.3 7 L0.3 10.5 L10.8 16 L12.6 16 L15.8 9.6 L15.5 8 L10.5 12.3 Z" fill="#eceff6" stroke="#a8b4c8" stroke-width="0.7" /><path d="M0.3 7 L5.3 0 L8 0 L15.5 8 L10.5 12.3 Z" fill="#3ca46c" stroke="none" stroke-width="1" /><path d="M0.3 7 L5.3 0 L8 0" fill="none" stroke="#2c8c58" stroke-width="0.8" /><path d="M6.8 3 L9 4.3" fill="none" stroke="#e8fff4" stroke-width="1.7" stroke-linecap="round"/><rect x="9" y="1" width="7" height="7" rx="1.2" fill="#f08000"/><path d="M12.5 2.2 L14.8 4.5 L12.5 6.8 L10.2 4.5 Z" fill="#fff" stroke="none" stroke-width="1" /><circle cx="12.5" cy="4.5" r="0.75" fill="#f08000" stroke="none" stroke-width="1"/><circle cx="14.6" cy="6.6" r="0.55" fill="#fff" stroke="none" stroke-width="1"/><circle cx="10.4" cy="6.6" r="0.55" fill="#fff" stroke="none" stroke-width="1"/><circle cx="14.6" cy="2.4" r="0.55" fill="#fff" stroke="none" stroke-width="1"/><circle cx="10.4" cy="2.4" r="0.55" fill="#fff" stroke="none" stroke-width="1"/></svg>
<svg style="left:343px;top:109px" width="16" height="17" viewBox="0 0 16 17"><path d="M0.3 7 L0.3 10.5 L10.8 16 L12.6 16 L15.8 9.6 L15.5 8 L10.5 12.3 Z" fill="#eceff6" stroke="#a8b4c8" stroke-width="0.7" /><path d="M0.3 7 L5.3 0 L8 0 L15.5 8 L10.5 12.3 Z" fill="#3ca46c" stroke="none" stroke-width="1" /><path d="M0.3 7 L5.3 0 L8 0" fill="none" stroke="#2c8c58" stroke-width="0.8" /><path d="M6.8 3 L9 4.3" fill="none" stroke="#e8fff4" stroke-width="1.7" stroke-linecap="round"/><defs><linearGradient id="rl" x1="0" y1="0" x2="0" y2="1"><stop offset="0" stop-color="#28b4ff"/><stop offset="1" stop-color="#0018ff"/></linearGradient></defs><rect x="3.5" y="7.5" width="8.2" height="4.8" rx="1" fill="#f8fcff"/><rect x="4" y="8" width="7.2" height="3.8" rx=".8" fill="url(#rl)"/><path d="M11.7 9.6 v3.4 h-4.2" fill="none" stroke="#181818" stroke-width="1.1" /><rect x="6.2" y="13.8" width="2.8" height="2" fill="#f01818" /><rect x="9" y="1" width="7" height="7" rx="1.2" fill="#f08000"/><path d="M12.5 2.2 L14.8 4.5 L12.5 6.8 L10.2 4.5 Z" fill="#fff" stroke="none" stroke-width="1" /><circle cx="12.5" cy="4.5" r="0.75" fill="#f08000" stroke="none" stroke-width="1"/><circle cx="14.6" cy="6.6" r="0.55" fill="#fff" stroke="none" stroke-width="1"/><circle cx="10.4" cy="6.6" r="0.55" fill="#fff" stroke="none" stroke-width="1"/><circle cx="14.6" cy="2.4" r="0.55" fill="#fff" stroke="none" stroke-width="1"/><circle cx="10.4" cy="2.4" r="0.55" fill="#fff" stroke="none" stroke-width="1"/></svg>
<div style="left:365px;top:106px;width:1px;height:22px;background:#a0a0a0;"></div>
<div style="left:366px;top:106px;width:1px;height:22px;background:#ffffff;"></div>
<svg style="left:373px;top:109px" width="16" height="17" viewBox="0 0 16 17"><g transform="translate(0,1)"><path d="M2 7.5 L7.5 2 L13 7.5 L13 14.5 L2 14.5 Z" fill="#fff" stroke="#b0b0b0" stroke-width="0.7" /><path d="M0.3 8.2 L7.5 1 L14.5 8" fill="none" stroke="#d07818" stroke-width="1.4" /><rect x="2" y="0.5" width="1.8" height="4.5" fill="#e89020" /><rect x="0.5" y="14.5" width="14" height="1" fill="#686868" /><rect x="4" y="8.5" width="2.2" height="6" fill="#f8a820" /><rect x="8.3" y="8" width="3" height="3.6" fill="#4898f0" /><rect x="9.6" y="8" width="0.5" height="3.6" fill="#c0e0ff" /></g><rect x="9" y="0.5" width="7" height="7" rx="1.2" fill="#f08000"/><path d="M12.5 1.7 L14.8 4 L12.5 6.3 L10.2 4 Z" fill="#fff" stroke="none" stroke-width="1" /><circle cx="12.5" cy="4" r="0.75" fill="#f08000" stroke="none" stroke-width="1"/><circle cx="14.6" cy="6.1" r="0.55" fill="#fff" stroke="none" stroke-width="1"/><circle cx="10.4" cy="6.1" r="0.55" fill="#fff" stroke="none" stroke-width="1"/><circle cx="14.6" cy="1.9" r="0.55" fill="#fff" stroke="none" stroke-width="1"/><circle cx="10.4" cy="1.9" r="0.55" fill="#fff" stroke="none" stroke-width="1"/></svg>
<svg style="left:396px;top:109px" width="16" height="17" viewBox="0 0 16 17"><g transform="translate(0,1)"><path d="M2 7.5 L7.5 2 L13 7.5 L13 14.5 L2 14.5 Z" fill="#fff" stroke="#b0b0b0" stroke-width="0.7" /><path d="M0.3 8.2 L7.5 1 L14.5 8" fill="none" stroke="#d07818" stroke-width="1.4" /><rect x="2" y="0.5" width="1.8" height="4.5" fill="#e89020" /><rect x="0.5" y="14.5" width="14" height="1" fill="#686868" /><defs><linearGradient id="rl" x1="0" y1="0" x2="0" y2="1"><stop offset="0" stop-color="#28b4ff"/><stop offset="1" stop-color="#0018ff"/></linearGradient></defs><rect x="3" y="6.5" width="8.2" height="4.8" rx="1" fill="#f8fcff"/><rect x="3.5" y="7" width="7.2" height="3.8" rx=".8" fill="url(#rl)"/><path d="M11.2 8.6 v3.4 h-4.2" fill="none" stroke="#181818" stroke-width="1.1" /><rect x="5.7" y="12.8" width="2.8" height="2" fill="#f01818" /></g><rect x="9" y="0.5" width="7" height="7" rx="1.2" fill="#f08000"/><path d="M12.5 1.7 L14.8 4 L12.5 6.3 L10.2 4 Z" fill="#fff" stroke="none" stroke-width="1" /><circle cx="12.5" cy="4" r="0.75" fill="#f08000" stroke="none" stroke-width="1"/><circle cx="14.6" cy="6.1" r="0.55" fill="#fff" stroke="none" stroke-width="1"/><circle cx="10.4" cy="6.1" r="0.55" fill="#fff" stroke="none" stroke-width="1"/><circle cx="14.6" cy="1.9" r="0.55" fill="#fff" stroke="none" stroke-width="1"/><circle cx="10.4" cy="1.9" r="0.55" fill="#fff" stroke="none" stroke-width="1"/></svg>
<div style="left:417px;top:106px;width:1px;height:22px;background:#a0a0a0;"></div>
<div style="left:418px;top:106px;width:1px;height:22px;background:#ffffff;"></div>
<svg style="left:424px;top:109px" width="16" height="16" viewBox="0 0 16 16"><rect x="0.5" y="1.5" width="14.5" height="12.5" fill="#fff" stroke="#a8a8a8" stroke-width="1"/><rect x="0" y="0" width="7" height="7" rx="1.2" fill="#969696"/><path d="M3.5 1.2 L5.8 3.5 L3.5 5.8 L1.2 3.5 Z" fill="#fff" stroke="none" stroke-width="1" /><circle cx="3.5" cy="3.5" r="0.75" fill="#969696" stroke="none" stroke-width="1"/><circle cx="5.6" cy="5.6" r="0.55" fill="#fff" stroke="none" stroke-width="1"/><circle cx="1.4" cy="5.6" r="0.55" fill="#fff" stroke="none" stroke-width="1"/><circle cx="5.6" cy="1.4" r="0.55" fill="#fff" stroke="none" stroke-width="1"/><circle cx="1.4" cy="1.4" r="0.55" fill="#fff" stroke="none" stroke-width="1"/><text x="7.5" y="13" font-family="Liberation Sans, sans-serif" font-size="8.5" fill="#000" text-anchor="start" textLength="5.5" lengthAdjust="spacingAndGlyphs">P</text></svg>
<svg style="left:447px;top:109px" width="16" height="16" viewBox="0 0 16 16"><rect x="0.5" y="1.5" width="14.5" height="12.5" fill="#fff" stroke="#a8a8a8" stroke-width="1"/><rect x="0" y="0" width="7" height="7" rx="1.2" fill="#969696"/><path d="M3.5 1.2 L5.8 3.5 L3.5 5.8 L1.2 3.5 Z" fill="#fff" stroke="none" stroke-width="1" /><circle cx="3.5" cy="3.5" r="0.75" fill="#969696" stroke="none" stroke-width="1"/><circle cx="5.6" cy="5.6" r="0.55" fill="#fff" stroke="none" stroke-width="1"/><circle cx="1.4" cy="5.6" r="0.55" fill="#fff" stroke="none" stroke-width="1"/><circle cx="5.6" cy="1.4" r="0.55" fill="#fff" stroke="none" stroke-width="1"/><circle cx="1.4" cy="1.4" r="0.55" fill="#fff" stroke="none" stroke-width="1"/><text x="3" y="13" font-family="Liberation Sans, sans-serif" font-size="8.5" fill="#000" text-anchor="start" textLength="11" lengthAdjust="spacingAndGlyphs">ПР</text></svg>
<svg style="left:473px;top:111px" width="10" height="13" viewBox="0 0 10 13"><path d="M5 0 L10 5.5 H7 V11.5 Q7 12.5 6 12.5 H4 Q3 12.5 3 11.5 V5.5 H0 Z" fill="#a0a0a0" stroke="none" stroke-width="1" /></svg>
<svg style="left:496px;top:111px" width="10" height="13" viewBox="0 0 10 13"><path d="M5 12.5 L10 7 H7 V1 Q7 0 6 0 H4 Q3 0 3 1 V7 H0 Z" fill="#a0a0a0" stroke="none" stroke-width="1" /></svg>
<div style="left:515px;top:106px;width:1px;height:22px;background:#a0a0a0;"></div>
<div style="left:516px;top:106px;width:1px;height:22px;background:#ffffff;"></div>
<svg style="left:522px;top:109px" width="16" height="16" viewBox="0 0 16 16"><path d="M4 5 L8 1 L12 5 L12 9 L4 9 Z" fill="#fff" stroke="#a0a0a0" stroke-width="0.6" /><path d="M3 5.6 L8 0.4 L13 5.6" fill="none" stroke="#8b3a10" stroke-width="1.1" /><rect x="6.4" y="5.96" width="1.76" height="3.04" fill="#d89040" /><rect x="8.5" y="6" width="2" height="2" fill="#90c0ff" /><rect x="3" y="0.5" width="1.3" height="2.5" fill="#8b3a10" /><path d="M0.5 12 L3.5 9 L6.5 12 L6.5 15 L0.5 15 Z" fill="#fff" stroke="#a0a0a0" stroke-width="0.6" /><path d="M-0.5 12.6 L3.5 8.4 L7.5 12.6" fill="none" stroke="#8b3a10" stroke-width="1.1" /><rect x="2.3" y="12.72" width="1.32" height="2.28" fill="#d89040" /><path d="M9.5 12 L12.5 9 L15.5 12 L15.5 15 L9.5 15 Z" fill="#fff" stroke="#a0a0a0" stroke-width="0.6" /><path d="M8.5 12.6 L12.5 8.4 L16.5 12.6" fill="none" stroke="#8b3a10" stroke-width="1.1" /><rect x="11.3" y="12.72" width="1.32" height="2.28" fill="#d89040" /></svg>
<svg style="left:545px;top:110px" width="16" height="15" viewBox="0 0 16 15"><rect x="3" y="1" width="12" height="11" fill="#58c0a8" stroke="#389880" stroke-width="1"/><defs><linearGradient id="tg" x1="0" y1="0" x2="0" y2="1"><stop offset="0" stop-color="#a8e8d8"/><stop offset="1" stop-color="#28a890"/></linearGradient></defs><rect x="0.5" y="2.5" width="12.5" height="11.5" fill="url(#tg)" stroke="#389880" stroke-width="1"/><text x="6.5" y="12.5" font-family="Liberation Sans, sans-serif" font-size="11" fill="#fff" text-anchor="middle" font-weight="bold" >%</text><rect x="9" y="-1" width="7" height="7" rx="1.2" fill="#f08000"/><path d="M12.5 0.2 L14.8 2.5 L12.5 4.8 L10.2 2.5 Z" fill="#fff" stroke="none" stroke-width="1" /><circle cx="12.5" cy="2.5" r="0.75" fill="#f08000" stroke="none" stroke-width="1"/><circle cx="14.6" cy="4.6" r="0.55" fill="#fff" stroke="none" stroke-width="1"/><circle cx="10.4" cy="4.6" r="0.55" fill="#fff" stroke="none" stroke-width="1"/><circle cx="14.6" cy="0.4" r="0.55" fill="#fff" stroke="none" stroke-width="1"/><circle cx="10.4" cy="0.4" r="0.55" fill="#fff" stroke="none" stroke-width="1"/></svg>
<div style="left:567px;top:106px;width:1px;height:22px;background:#a0a0a0;"></div>
<div style="left:568px;top:106px;width:1px;height:22px;background:#ffffff;"></div>
<svg style="left:574px;top:110px" width="16" height="15" viewBox="0 0 16 15"><defs><linearGradient id="ld8f8e8" x1="0" y1="0" x2="0" y2="1"><stop offset="0" stop-color="#d8f8e8"/><stop offset="1" stop-color="#f8fcfa"/></linearGradient></defs><rect x="0.5" y="1.5" width="15" height="12.5" fill="url(#ld8f8e8)" stroke="#a8a8a8" stroke-width="1"/><text x="1.2" y="12.5" font-family="Liberation Sans, sans-serif" font-size="12" fill="#101010" text-anchor="start" textLength="11" lengthAdjust="spacingAndGlyphs">%</text><rect x="9" y="-1" width="7" height="7" rx="1.2" fill="#f08000"/><path d="M12.5 0.2 L14.8 2.5 L12.5 4.8 L10.2 2.5 Z" fill="#fff" stroke="none" stroke-width="1" /><circle cx="12.5" cy="2.5" r="0.75" fill="#f08000" stroke="none" stroke-width="1"/><circle cx="14.6" cy="4.6" r="0.55" fill="#fff" stroke="none" stroke-width="1"/><circle cx="10.4" cy="4.6" r="0.55" fill="#fff" stroke="none" stroke-width="1"/><circle cx="14.6" cy="0.4" r="0.55" fill="#fff" stroke="none" stroke-width="1"/><circle cx="10.4" cy="0.4" r="0.55" fill="#fff" stroke="none" stroke-width="1"/></svg>
<svg style="left:597px;top:110px" width="16" height="15" viewBox="0 0 16 15"><defs><linearGradient id="lc8f8c8" x1="0" y1="0" x2="0" y2="1"><stop offset="0" stop-color="#c8f8c8"/><stop offset="1" stop-color="#f8fcfa"/></linearGradient></defs><rect x="0.5" y="1.5" width="15" height="12.5" fill="url(#lc8f8c8)" stroke="#a8a8a8" stroke-width="1"/><text x="1.2" y="12.5" font-family="Liberation Sans, sans-serif" font-size="12" fill="#101010" text-anchor="start" textLength="14.5" lengthAdjust="spacingAndGlyphs">M29</text><rect x="9" y="-1" width="7" height="7" rx="1.2" fill="#f08000"/><path d="M12.5 0.2 L14.8 2.5 L12.5 4.8 L10.2 2.5 Z" fill="#fff" stroke="none" stroke-width="1" /><circle cx="12.5" cy="2.5" r="0.75" fill="#f08000" stroke="none" stroke-width="1"/><circle cx="14.6" cy="4.6" r="0.55" fill="#fff" stroke="none" stroke-width="1"/><circle cx="10.4" cy="4.6" r="0.55" fill="#fff" stroke="none" stroke-width="1"/><circle cx="14.6" cy="0.4" r="0.55" fill="#fff" stroke="none" stroke-width="1"/><circle cx="10.4" cy="0.4" r="0.55" fill="#fff" stroke="none" stroke-width="1"/></svg>
<svg style="left:620px;top:110px" width="16" height="15" viewBox="0 0 16 15"><defs><linearGradient id="lc8dcf8" x1="0" y1="0" x2="0" y2="1"><stop offset="0" stop-color="#c8dcf8"/><stop offset="1" stop-color="#f8fcfa"/></linearGradient></defs><rect x="0.5" y="1.5" width="15" height="12.5" fill="url(#lc8dcf8)" stroke="#a8a8a8" stroke-width="1"/><text x="1.2" y="12.5" font-family="Liberation Sans, sans-serif" font-size="12" fill="#101010" text-anchor="start" textLength="12" lengthAdjust="spacingAndGlyphs">PP</text><rect x="9" y="-1" width="7" height="7" rx="1.2" fill="#f08000"/><path d="M12.5 0.2 L14.8 2.5 L12.5 4.8 L10.2 2.5 Z" fill="#fff" stroke="none" stroke-width="1" /><circle cx="12.5" cy="2.5" r="0.75" fill="#f08000" stroke="none" stroke-width="1"/><circle cx="14.6" cy="4.6" r="0.55" fill="#fff" stroke="none" stroke-width="1"/><circle cx="10.4" cy="4.6" r="0.55" fill="#fff" stroke="none" stroke-width="1"/><circle cx="14.6" cy="0.4" r="0.55" fill="#fff" stroke="none" stroke-width="1"/><circle cx="10.4" cy="0.4" r="0.55" fill="#fff" stroke="none" stroke-width="1"/></svg>
<svg style="left:643px;top:110px" width="16" height="15" viewBox="0 0 16 15"><defs><linearGradient id="lc8f8c8" x1="0" y1="0" x2="0" y2="1"><stop offset="0" stop-color="#c8f8c8"/><stop offset="1" stop-color="#f8fcfa"/></linearGradient></defs><rect x="0.5" y="1.5" width="15" height="12.5" fill="url(#lc8f8c8)" stroke="#a8a8a8" stroke-width="1"/><text x="1.2" y="12.5" font-family="Liberation Sans, sans-serif" font-size="12" fill="#101010" text-anchor="start" textLength="13" lengthAdjust="spacingAndGlyphs">Ф3</text><rect x="9" y="-1" width="7" height="7" rx="1.2" fill="#f08000"/><path d="M12.5 0.2 L14.8 2.5 L12.5 4.8 L10.2 2.5 Z" fill="#fff" stroke="none" stroke-width="1" /><circle cx="12.5" cy="2.5" r="0.75" fill="#f08000" stroke="none" stroke-width="1"/><circle cx="14.6" cy="4.6" r="0.55" fill="#fff" stroke="none" stroke-width="1"/><circle cx="10.4" cy="4.6" r="0.55" fill="#fff" stroke="none" stroke-width="1"/><circle cx="14.6" cy="0.4" r="0.55" fill="#fff" stroke="none" stroke-width="1"/><circle cx="10.4" cy="0.4" r="0.55" fill="#fff" stroke="none" stroke-width="1"/></svg>
<div style="left:665px;top:106px;width:1px;height:22px;background:#a0a0a0;"></div>
<div style="left:666px;top:106px;width:1px;height:22px;background:#ffffff;"></div>
<svg style="left:672px;top:110px" width="16" height="15" viewBox="0 0 16 15"><path d="M0.5 1.5 H6 L7.5 3.5 H15.5 V13.5 H0.5 Z" fill="#a8a8a8" stroke="#989898" stroke-width="1" /><rect x="1" y="4.5" width="14" height="1" fill="#c0c0c0" /><rect x="9" y="-1" width="7" height="7" rx="1.2" fill="#a0a0a0"/><path d="M12.5 0.2 L14.8 2.5 L12.5 4.8 L10.2 2.5 Z" fill="#fff" stroke="none" stroke-width="1" /><circle cx="12.5" cy="2.5" r="0.75" fill="#a0a0a0" stroke="none" stroke-width="1"/><circle cx="14.6" cy="4.6" r="0.55" fill="#fff" stroke="none" stroke-width="1"/><circle cx="10.4" cy="4.6" r="0.55" fill="#fff" stroke="none" stroke-width="1"/><circle cx="14.6" cy="0.4" r="0.55" fill="#fff" stroke="none" stroke-width="1"/><circle cx="10.4" cy="0.4" r="0.55" fill="#fff" stroke="none" stroke-width="1"/></svg>
<div style="left:694px;top:106px;width:1px;height:22px;background:#a0a0a0;"></div>
<div style="left:695px;top:106px;width:1px;height:22px;background:#ffffff;"></div>
<svg style="left:703px;top:111px" width="12" height="12" viewBox="0 0 12 12"><path d="M1.5 1.5 L10 10 M10 1.5 L1.5 10" fill="none" stroke="#f04828" stroke-width="1.7" stroke-linecap="round"/></svg>
<div style="left:1700px;top:6px;width:16px;height:15px;background:#f0f0f0;"></div>
<div style="left:1700px;top:6px;width:15px;height:1px;background:#ffffff;"></div>
<div style="left:1700px;top:6px;width:1px;height:14px;background:#ffffff;"></div>
<div style="left:1701px;top:19px;width:14px;height:1px;background:#a0a0a0;"></div>
<div style="left:1714px;top:7px;width:1px;height:13px;background:#a0a0a0;"></div>
<div style="left:1700px;top:20px;width:16px;height:1px;background:#696969;"></div>
<div style="left:1715px;top:6px;width:1px;height:15px;background:#696969;"></div>
<svg style="left:1700px;top:6.5px" width="16" height="14" viewBox="0 0 16 14"><rect x="4" y="9" width="6" height="2" fill="#000" /></svg>
<div style="left:1717px;top:6px;width:16px;height:15px;background:#f0f0f0;"></div>
<div style="left:1717px;top:6px;width:15px;height:1px;background:#ffffff;"></div>
<div style="left:1717px;top:6px;width:1px;height:14px;background:#ffffff;"></div>
<div style="left:1718px;top:19px;width:14px;height:1px;background:#a0a0a0;"></div>
<div style="left:1731px;top:7px;width:1px;height:13px;background:#a0a0a0;"></div>
<div style="left:1717px;top:20px;width:16px;height:1px;background:#696969;"></div>
<div style="left:1732px;top:6px;width:1px;height:15px;background:#696969;"></div>
<svg style="left:1717px;top:6.5px" width="16" height="14" viewBox="0 0 16 14"><path d="M5.5 2.5 H11.5 V7.5 H9.5 M5.5 2.5 V4.5" fill="none" stroke="#000" stroke-width="1" /><rect x="5" y="2" width="7" height="2" fill="#000" /><path d="M3.5 5.5 H9.5 V10.5 H3.5 Z" fill="none" stroke="#000" stroke-width="1" /><rect x="3" y="5" width="7" height="2" fill="#000" /></svg>
<div style="left:1736px;top:6px;width:16px;height:15px;background:#f0f0f0;"></div>
<div style="left:1736px;top:6px;width:15px;height:1px;background:#ffffff;"></div>
<div style="left:1736px;top:6px;width:1px;height:14px;background:#ffffff;"></div>
<div style="left:1737px;top:19px;width:14px;height:1px;background:#a0a0a0;"></div>
<div style="left:1750px;top:7px;width:1px;height:13px;background:#a0a0a0;"></div>
<div style="left:1736px;top:20px;width:16px;height:1px;background:#696969;"></div>
<div style="left:1751px;top:6px;width:1px;height:15px;background:#696969;"></div>
<svg style="left:1736px;top:6.5px" width="16" height="14" viewBox="0 0 16 14"><path d="M4.5 3.5 L11 10 M11 3.5 L4.5 10" fill="none" stroke="#000" stroke-width="2" /></svg>
<div style="left:1px;top:130px;width:1755px;height:1px;background:#ffffff;"></div>
<div style="left:1755px;top:1px;width:1px;height:150px;background:#ffffff;"></div>
<div style="left:1756px;top:0px;width:2px;height:1119px;background:#808080;"></div>
<div style="left:1754px;top:151px;width:1px;height:935px;background:#696969;"></div>
<div style="left:1755px;top:151px;width:1px;height:935px;background:#a0a0a0;"></div>
<div style="left:0px;top:1118px;width:1758px;height:1px;background:#808080;"></div>
<div style="left:3px;top:131px;width:63px;height:1px;background:#ffffff;"></div>
<div style="left:2px;top:131px;width:1px;height:955px;background:#ffffff;"></div>
<div style="left:66px;top:132px;width:1px;height:19px;background:#a0a0a0;"></div>
<div style="left:67px;top:133px;width:1px;height:18px;background:#696969;"></div>
<div style="left:68px;top:151px;width:289px;height:1px;background:#ffffff;"></div>
<div style="left:356px;top:151px;width:1px;height:934px;background:#a0a0a0;"></div>
<div style="left:357px;top:151px;width:1px;height:935px;background:#696969;"></div>
<div style="left:2px;top:1085px;width:356px;height:1px;background:#696969;"></div>
<div style="left:2px;top:1084px;width:355px;height:1px;background:#a0a0a0;"></div>
<div class="t" style="top:131.84px;font-size:12px;line-height:16px;color:#000;transform:scaleX(0.8782);transform-origin:left 50%;left:10px;">Структура</div>
<div style="left:5px;top:154px;width:349px;height:929px;background:#ffffff;"></div>
<div style="left:5px;top:154px;width:349px;height:1px;background:#a0a0a0;"></div>
<div style="left:5px;top:154px;width:1px;height:929px;background:#a0a0a0;"></div>
<div style="left:6px;top:155px;width:347px;height:1px;background:#696969;"></div>
<div style="left:6px;top:155px;width:1px;height:927px;background:#696969;"></div>
<div style="left:6px;top:1081px;width:347px;height:1px;background:#e3e3e3;"></div>
<div style="left:352px;top:155px;width:1px;height:927px;background:#e3e3e3;"></div>
<div style="left:5px;top:1082px;width:349px;height:1px;background:#ffffff;"></div>
<div style="left:353px;top:154px;width:1px;height:929px;background:#ffffff;"></div>
<div style="left:7px;top:1065px;width:345px;height:16px;background:#f0f0f0;"></div>
<div style="left:24px;top:1065px;width:260px;height:16px;background:#cdcdcd;"></div>
<svg style="left:12px;top:1068px" width="8" height="10" viewBox="0 0 8 10"><path d="M6 1 L2 5 L6 9" fill="none" stroke="#606060" stroke-width="1.8" /></svg>
<svg style="left:340px;top:1068px" width="8" height="10" viewBox="0 0 8 10"><path d="M2 1 L6 5 L2 9" fill="none" stroke="#606060" stroke-width="1.8" /></svg>
<div style="left:361px;top:131px;width:2px;height:954px;background:#ffffff;"></div>
<div style="left:362px;top:1084px;width:1393px;height:1px;background:#a0a0a0;"></div>
<div style="left:362px;top:1085px;width:1394px;height:1px;background:#696969;"></div>
<div style="left:364px;top:132px;width:75px;height:1px;background:#ffffff;"></div>
<div style="left:363px;top:133px;width:1px;height:19px;background:#ffffff;"></div>
<div style="left:439px;top:133px;width:1px;height:19px;background:#a0a0a0;"></div>
<div style="left:440px;top:134px;width:1px;height:18px;background:#696969;"></div>
<div style="left:441px;top:151px;width:1313px;height:1px;background:#ffffff;"></div>
<div style="left:442px;top:134px;width:66px;height:1px;background:#ffffff;"></div>
<div style="left:508px;top:135px;width:1px;height:16px;background:#a0a0a0;"></div>
<div style="left:509px;top:136px;width:1px;height:15px;background:#696969;"></div>
<div class="t" style="top:134.84px;font-size:12px;line-height:16px;color:#000;transform:scaleX(0.9208);transform-origin:left 50%;left:445.6px;">Параметры</div>
<div style="left:510px;top:134px;width:101px;height:1px;background:#ffffff;"></div>
<div style="left:611px;top:135px;width:1px;height:16px;background:#a0a0a0;"></div>
<div style="left:612px;top:136px;width:1px;height:15px;background:#696969;"></div>
<div class="t" style="top:134.84px;font-size:12px;line-height:16px;color:#000;transform:scaleX(0.9238);transform-origin:left 50%;left:516.8px;">Объектная смета</div>
<div style="left:613px;top:134px;width:57px;height:1px;background:#ffffff;"></div>
<div style="left:670px;top:135px;width:1px;height:16px;background:#a0a0a0;"></div>
<div style="left:671px;top:136px;width:1px;height:15px;background:#696969;"></div>
<div class="t" style="top:134.84px;font-size:12px;line-height:16px;color:#000;transform:scaleX(0.8626);transform-origin:left 50%;left:618.5px;">ССР и СЗ</div>
<div style="left:672px;top:134px;width:41px;height:1px;background:#ffffff;"></div>
<div style="left:713px;top:135px;width:1px;height:16px;background:#a0a0a0;"></div>
<div style="left:714px;top:136px;width:1px;height:15px;background:#696969;"></div>
<div class="t" style="top:134.84px;font-size:12px;line-height:16px;color:#000;transform:scaleX(0.8977);transform-origin:left 50%;left:677.5px;">НМЦК</div>
<div style="left:715px;top:134px;width:40px;height:1px;background:#ffffff;"></div>
<div style="left:755px;top:135px;width:1px;height:16px;background:#a0a0a0;"></div>
<div style="left:756px;top:136px;width:1px;height:15px;background:#696969;"></div>
<div class="t" style="top:134.84px;font-size:12px;line-height:16px;color:#000;transform:scaleX(0.8581);transform-origin:left 50%;left:721.8px;">ВОР</div>
<div style="left:757px;top:134px;width:196px;height:1px;background:#ffffff;"></div>
<div style="left:953px;top:135px;width:1px;height:16px;background:#a0a0a0;"></div>
<div style="left:954px;top:136px;width:1px;height:15px;background:#696969;"></div>
<div class="t" style="top:134.84px;font-size:12px;line-height:16px;color:#000;transform:scaleX(0.9096);transform-origin:left 50%;left:763.5px;">Исполнение Сметы контракта (ЕИС)</div>
<div class="t" style="top:132.84px;font-size:12px;line-height:16px;color:#000;transform:scaleX(0.8841);transform-origin:left 50%;left:371px;">Содержание</div>
<div style="left:366px;top:155px;width:1384px;height:886px;background:#ffffff;border:1px solid #a0a0a0;"></div>
<div style="left:368px;top:157px;width:1380px;height:17px;background:#f0f0f0;"></div>
<div style="left:368px;top:157px;width:1380px;height:1px;background:#ffffff;"></div>
<div style="left:368px;top:157px;width:1px;height:17px;background:#ffffff;"></div>
<div style="left:369px;top:172px;width:1379px;height:1px;background:#a0a0a0;"></div>
<div style="left:368px;top:173px;width:1380px;height:1px;background:#696969;"></div>
<div style="left:1746px;top:158px;width:1px;height:15px;background:#a0a0a0;"></div>
<div style="left:1747px;top:157px;width:1px;height:17px;background:#696969;"></div>
<div class="t" style="top:157.84px;font-size:12px;line-height:16px;color:#000;transform:scaleX(0.9017);transform-origin:left 50%;left:375px;">Наименование</div>
<svg style="left:370px;top:177px" width="16" height="14" viewBox="0 0 16 14"><defs><linearGradient id="fg" x1="0" y1="0" x2="1" y2="1"><stop offset="0" stop-color="#1e90ff"/><stop offset="1" stop-color="#40e0ff"/></linearGradient></defs><path d="M0.5 1.5 L6 0.5 L8 2.5 L15.5 2.5 L15.5 13.5 L0.5 13.5 Z" fill="#a8b8c8" stroke="#a0a0a8" stroke-width="1" /><path d="M1 2.5 L6 2 L7.5 3.5 L15 3.5 L15 13 L1 13 Z" fill="url(#fg)" stroke="none" stroke-width="1" /></svg>
<div class="t" style="top:176.84px;font-size:12px;line-height:16px;color:#000;transform:scaleX(0.9543);transform-origin:left 50%;left:388px;">СТРУКТУРА</div>
<svg style="left:370px;top:194px" width="16" height="14" viewBox="0 0 16 14"><defs><linearGradient id="fg" x1="0" y1="0" x2="1" y2="1"><stop offset="0" stop-color="#1e90ff"/><stop offset="1" stop-color="#40e0ff"/></linearGradient></defs><path d="M0.5 1.5 L6 0.5 L8 2.5 L15.5 2.5 L15.5 13.5 L0.5 13.5 Z" fill="#a8b8c8" stroke="#a0a0a8" stroke-width="1" /><path d="M1 2.5 L6 2 L7.5 3.5 L15 3.5 L15 13 L1 13 Z" fill="url(#fg)" stroke="none" stroke-width="1" /></svg>
<div class="t" style="top:193.84px;font-size:12px;line-height:16px;color:#000;transform:scaleX(0.8992);transform-origin:left 50%;left:388px;">СМЕТЫ</div>
<svg style="left:370px;top:211px" width="16" height="14" viewBox="0 0 16 14"><defs><linearGradient id="fg" x1="0" y1="0" x2="1" y2="1"><stop offset="0" stop-color="#1e90ff"/><stop offset="1" stop-color="#40e0ff"/></linearGradient></defs><path d="M0.5 1.5 L6 0.5 L8 2.5 L15.5 2.5 L15.5 13.5 L0.5 13.5 Z" fill="#a8b8c8" stroke="#a0a0a8" stroke-width="1" /><path d="M1 2.5 L6 2 L7.5 3.5 L15 3.5 L15 13 L1 13 Z" fill="url(#fg)" stroke="none" stroke-width="1" /></svg>
<div class="t" style="top:210.84px;font-size:12px;line-height:16px;color:#000;transform:scaleX(0.9200);transform-origin:left 50%;left:388px;">ВЫПОЛНЕНИЯ</div>
<svg style="left:370px;top:228px" width="16" height="14" viewBox="0 0 16 14"><defs><linearGradient id="fg" x1="0" y1="0" x2="1" y2="1"><stop offset="0" stop-color="#1e90ff"/><stop offset="1" stop-color="#40e0ff"/></linearGradient></defs><path d="M0.5 1.5 L6 0.5 L8 2.5 L15.5 2.5 L15.5 13.5 L0.5 13.5 Z" fill="#a8b8c8" stroke="#a0a0a8" stroke-width="1" /><path d="M1 2.5 L6 2 L7.5 3.5 L15 3.5 L15 13 L1 13 Z" fill="url(#fg)" stroke="none" stroke-width="1" /></svg>
<div style="left:367px;top:598px;width:1382px;height:1px;background:#a0a0a0;"></div>
<div style="left:367px;top:599px;width:1382px;height:36px;background:#ffffe1;"></div>
<div style="left:367px;top:635px;width:1382px;height:1px;background:#a0a0a0;"></div>
<div style="left:367px;top:636px;width:1382px;height:16px;background:#f0f0f0;"></div>
<div style="left:367px;top:652px;width:1382px;height:1px;background:#a0a0a0;"></div>
<div style="left:1748px;top:636px;width:1px;height:16px;background:#a0a0a0;"></div>
<div style="left:973px;top:637px;width:1px;height:14px;background:#a0a0a0;"></div>
<div style="left:1215px;top:637px;width:1px;height:14px;background:#a0a0a0;"></div>
<div style="left:1337px;top:637px;width:1px;height:14px;background:#a0a0a0;"></div>
<div style="left:1506px;top:637px;width:1px;height:14px;background:#a0a0a0;"></div>
<div class="t" style="top:635.84px;font-size:12px;line-height:16px;color:#000;transform:scaleX(0.8759);transform-origin:left 50%;left:977px;">Шифр</div>
<div class="t" style="top:635.84px;font-size:12px;line-height:16px;color:#000;transform:scaleX(0.9581);transform-origin:left 50%;left:1219px;">Ревизия</div>
<div class="t" style="top:635.84px;font-size:12px;line-height:16px;color:#000;transform:scaleX(0.9788);transform-origin:left 50%;left:1341px;">Дата</div>
<div class="t" style="top:635.84px;font-size:12px;line-height:16px;color:#000;transform:scaleX(0.9378);transform-origin:left 50%;left:1510px;">Пользователь</div>
<div style="left:367px;top:705px;width:1382px;height:1px;background:#a0a0a0;"></div>
<div style="left:367px;top:706px;width:1382px;height:36px;background:#ffffe1;"></div>
<div style="left:367px;top:742px;width:1382px;height:1px;background:#a0a0a0;"></div>
<div style="left:367px;top:799px;width:1382px;height:1px;background:#a0a0a0;"></div>
<div style="left:368px;top:800px;width:1px;height:117px;background:#a0a0a0;"></div>
<div class="t" style="top:840.84px;font-size:12px;line-height:16px;color:#000;transform:scaleX(0.9182);transform-origin:left 50%;left:382px;">- индексы по смете</div>
<div class="t" style="top:744.84px;font-size:12px;line-height:16px;color:#000;left:578.3px;">а</div>
<div style="left:368px;top:917px;width:1379px;height:1px;background:#a0a0a0;"></div>
<div style="left:368px;top:918px;width:1378px;height:16px;background:#f0f0f0;"></div>
<div style="left:1746px;top:917px;width:1px;height:120px;background:#a0a0a0;"></div>
<div style="left:1446px;top:919px;width:1px;height:14px;background:#a0a0a0;"></div>
<div style="left:1596px;top:919px;width:1px;height:14px;background:#a0a0a0;"></div>
<div class="t" style="top:917.84px;font-size:12px;line-height:16px;color:#000;transform:scaleX(0.8988);transform-origin:left 50%;left:372px;">Стоимость</div>
<div class="t" style="top:917.84px;font-size:12px;line-height:16px;color:#000;transform:scaleX(0.9264);transform-origin:right 50%;right:163px;">Базовый уровень цен</div>
<div class="t" style="top:917.84px;font-size:12px;line-height:16px;color:#000;transform:scaleX(0.9192);transform-origin:right 50%;right:13px;">Текущий уровень цен</div>
<div style="left:368px;top:934px;width:1379px;height:1px;background:#a0a0a0;"></div>
<div style="left:368px;top:935px;width:1378px;height:16px;background:#e0ffff;"></div>
<div class="t" style="top:934.84px;font-size:12px;line-height:16px;color:#000;transform:scaleX(0.8959);transform-origin:left 50%;left:373.5px;">Строительных работ с НР и СП</div>
<div class="t" style="top:934.84px;font-size:12px;line-height:16px;color:#000;transform:scaleX(0.8829);transform-origin:right 50%;right:163px;">104 753,09</div>
<div class="t" style="top:934.84px;font-size:12px;line-height:16px;color:#000;transform:scaleX(0.8995);transform-origin:right 50%;right:13px;">436 263,36</div>
<div style="left:368px;top:951px;width:1379px;height:1px;background:#a0a0a0;"></div>
<div style="left:368px;top:952px;width:1378px;height:16px;background:#e0ffff;"></div>
<div class="t" style="top:951.84px;font-size:12px;line-height:16px;color:#000;transform:scaleX(0.8958);transform-origin:left 50%;left:373.5px;">Монтажных работ с НР и СП</div>
<div class="t" style="top:951.84px;font-size:12px;line-height:16px;color:#000;transform:scaleX(0.8853);transform-origin:right 50%;right:163px;">1 277 657,57</div>
<div class="t" style="top:951.84px;font-size:12px;line-height:16px;color:#000;transform:scaleX(0.8996);transform-origin:right 50%;right:13px;">4 201 574,39</div>
<div style="left:368px;top:968px;width:1379px;height:1px;background:#a0a0a0;"></div>
<div style="left:368px;top:969px;width:1378px;height:16px;background:#e0ffff;"></div>
<div class="t" style="top:968.84px;font-size:12px;line-height:16px;color:#000;transform:scaleX(0.8904);transform-origin:left 50%;left:373.5px;">Оборудования</div>
<div class="t" style="top:968.84px;font-size:12px;line-height:16px;color:#000;transform:scaleX(0.8568);transform-origin:right 50%;right:163px;">0,00</div>
<div class="t" style="top:968.84px;font-size:12px;line-height:16px;color:#000;transform:scaleX(0.8568);transform-origin:right 50%;right:13px;">0,00</div>
<div style="left:368px;top:985px;width:1379px;height:1px;background:#a0a0a0;"></div>
<div style="left:368px;top:986px;width:1378px;height:16px;background:#e0ffff;"></div>
<div class="t" style="top:985.84px;font-size:12px;line-height:16px;color:#000;transform:scaleX(0.8854);transform-origin:left 50%;left:373.5px;">Прочих работ с НР и СП</div>
<div class="t" style="top:985.84px;font-size:12px;line-height:16px;color:#000;transform:scaleX(0.8568);transform-origin:right 50%;right:163px;">0,00</div>
<div class="t" style="top:985.84px;font-size:12px;line-height:16px;color:#000;transform:scaleX(0.8568);transform-origin:right 50%;right:13px;">0,00</div>
<div style="left:368px;top:1002px;width:1379px;height:1px;background:#a0a0a0;"></div>
<div style="left:368px;top:1003px;width:1378px;height:16px;background:#e0ffff;"></div>
<div class="t" style="top:1002.84px;font-size:12px;line-height:16px;color:#000;font-weight:bold;transform:scaleX(1.0208);transform-origin:left 50%;left:374.5px;">Всего с НР и СП</div>
<div class="t" style="top:1002.84px;font-size:12px;line-height:16px;color:#000;font-weight:bold;transform:scaleX(1.0567);transform-origin:right 50%;right:163px;">1 382 410,66</div>
<div class="t" style="top:1002.84px;font-size:12px;line-height:16px;color:#000;font-weight:bold;transform:scaleX(1.0710);transform-origin:right 50%;right:13px;">4 637 837,75</div>
<div style="left:368px;top:1019px;width:1379px;height:1px;background:#a0a0a0;"></div>
<div style="left:368px;top:1020px;width:1378px;height:16px;background:#e0ffff;"></div>
<div class="t" style="top:1019.84px;font-size:12px;line-height:16px;color:#000;font-weight:bold;transform:scaleX(1.0125);transform-origin:left 50%;left:374.5px;">Итого с начислениями</div>
<div class="t" style="top:1019.84px;font-size:12px;line-height:16px;color:#000;font-weight:bold;transform:scaleX(1.0567);transform-origin:right 50%;right:163px;">1 382 410,66</div>
<div class="t" style="top:1019.84px;font-size:12px;line-height:16px;color:#000;font-weight:bold;transform:scaleX(1.0710);transform-origin:right 50%;right:13px;">4 637 837,75</div>
<div style="left:368px;top:1036px;width:1379px;height:1px;background:#a0a0a0;"></div>
<div style="left:366px;top:1044px;width:100px;height:36px;background:#f0f0f0;"></div>
<div style="left:366px;top:1044px;width:99px;height:1px;background:#ffffff;"></div>
<div style="left:366px;top:1044px;width:1px;height:35px;background:#ffffff;"></div>
<div style="left:367px;top:1078px;width:98px;height:1px;background:#a0a0a0;"></div>
<div style="left:464px;top:1045px;width:1px;height:34px;background:#a0a0a0;"></div>
<div style="left:366px;top:1079px;width:100px;height:1px;background:#696969;"></div>
<div style="left:465px;top:1044px;width:1px;height:36px;background:#696969;"></div>
<div class="t" style="top:1062.84px;font-size:12px;line-height:16px;color:#000;transform:scaleX(0.9347);transform-origin:left 50%;left:371.5px;">Проектная смета</div>
<div style="left:466px;top:1044px;width:100px;height:36px;background:#f0f0f0;"></div>
<div style="left:466px;top:1044px;width:99px;height:1px;background:#ffffff;"></div>
<div style="left:466px;top:1044px;width:1px;height:35px;background:#ffffff;"></div>
<div style="left:467px;top:1078px;width:98px;height:1px;background:#a0a0a0;"></div>
<div style="left:564px;top:1045px;width:1px;height:34px;background:#a0a0a0;"></div>
<div style="left:466px;top:1079px;width:100px;height:1px;background:#696969;"></div>
<div style="left:565px;top:1044px;width:1px;height:36px;background:#696969;"></div>
<div class="t" style="top:1062.84px;font-size:12px;line-height:16px;color:#000;transform:scaleX(1.0123);transform-origin:left 50%;left:491.5px;">Акт КС-2</div>
<div style="left:566px;top:1044px;width:100px;height:36px;background:#f0f0f0;"></div>
<div style="left:566px;top:1044px;width:99px;height:1px;background:#ffffff;"></div>
<div style="left:566px;top:1044px;width:1px;height:35px;background:#ffffff;"></div>
<div style="left:567px;top:1078px;width:98px;height:1px;background:#a0a0a0;"></div>
<div style="left:664px;top:1045px;width:1px;height:34px;background:#a0a0a0;"></div>
<div style="left:566px;top:1079px;width:100px;height:1px;background:#696969;"></div>
<div style="left:665px;top:1044px;width:1px;height:36px;background:#696969;"></div>
<div class="t" style="top:1062.84px;font-size:12px;line-height:16px;color:#000;transform:scaleX(0.9185);transform-origin:left 50%;left:573.5px;">Исполнительная</div>
<div style="left:666px;top:1044px;width:100px;height:36px;background:#f0f0f0;"></div>
<div style="left:666px;top:1044px;width:99px;height:1px;background:#ffffff;"></div>
<div style="left:666px;top:1044px;width:1px;height:35px;background:#ffffff;"></div>
<div style="left:667px;top:1078px;width:98px;height:1px;background:#a0a0a0;"></div>
<div style="left:764px;top:1045px;width:1px;height:34px;background:#a0a0a0;"></div>
<div style="left:666px;top:1079px;width:100px;height:1px;background:#696969;"></div>
<div style="left:765px;top:1044px;width:1px;height:36px;background:#696969;"></div>
<div class="t" style="top:1062.84px;font-size:12px;line-height:16px;color:#000;transform:scaleX(0.9005);transform-origin:left 50%;left:680px;">Журнал КС-6а</div>
<div style="left:766px;top:1044px;width:100px;height:36px;background:#f0f0f0;"></div>
<div style="left:766px;top:1044px;width:99px;height:1px;background:#ffffff;"></div>
<div style="left:766px;top:1044px;width:1px;height:35px;background:#ffffff;"></div>
<div style="left:767px;top:1078px;width:98px;height:1px;background:#a0a0a0;"></div>
<div style="left:864px;top:1045px;width:1px;height:34px;background:#a0a0a0;"></div>
<div style="left:766px;top:1079px;width:100px;height:1px;background:#696969;"></div>
<div style="left:865px;top:1044px;width:1px;height:36px;background:#696969;"></div>
<div class="t" style="top:1062.84px;font-size:12px;line-height:16px;color:#000;transform:scaleX(0.8815);transform-origin:left 50%;left:788px;">Отчет М-29</div>
<div style="left:866px;top:1044px;width:100px;height:36px;background:#f0f0f0;"></div>
<div style="left:866px;top:1044px;width:99px;height:1px;background:#ffffff;"></div>
<div style="left:866px;top:1044px;width:1px;height:35px;background:#ffffff;"></div>
<div style="left:867px;top:1078px;width:98px;height:1px;background:#a0a0a0;"></div>
<div style="left:964px;top:1045px;width:1px;height:34px;background:#a0a0a0;"></div>
<div style="left:866px;top:1079px;width:100px;height:1px;background:#696969;"></div>
<div style="left:965px;top:1044px;width:1px;height:36px;background:#696969;"></div>
<div class="t" style="top:1062.84px;font-size:12px;line-height:16px;color:#000;transform:scaleX(0.9191);transform-origin:left 50%;left:869.5px;">Ресурсный расчет</div>
<div style="left:966px;top:1044px;width:100px;height:36px;background:#f0f0f0;"></div>
<div style="left:966px;top:1044px;width:99px;height:1px;background:#ffffff;"></div>
<div style="left:966px;top:1044px;width:1px;height:35px;background:#ffffff;"></div>
<div style="left:967px;top:1078px;width:98px;height:1px;background:#a0a0a0;"></div>
<div style="left:1064px;top:1045px;width:1px;height:34px;background:#a0a0a0;"></div>
<div style="left:966px;top:1079px;width:100px;height:1px;background:#696969;"></div>
<div style="left:1065px;top:1044px;width:1px;height:36px;background:#696969;"></div>
<div class="t" style="top:1062.84px;font-size:12px;line-height:16px;color:#000;transform:scaleX(0.9139);transform-origin:left 50%;left:981px;">Справка КС-3</div>
<div style="left:1px;top:1087px;width:1755px;height:1px;background:#ffffff;"></div>
<div style="left:4px;top:1090px;width:86px;height:1px;background:#a0a0a0;"></div>
<div style="left:4px;top:1090px;width:1px;height:27px;background:#a0a0a0;"></div>
<div style="left:4px;top:1116px;width:86px;height:1px;background:#ffffff;"></div>
<div style="left:89px;top:1090px;width:1px;height:27px;background:#ffffff;"></div>
<div style="left:93px;top:1090px;width:297px;height:1px;background:#a0a0a0;"></div>
<div style="left:93px;top:1090px;width:1px;height:27px;background:#a0a0a0;"></div>
<div style="left:93px;top:1116px;width:297px;height:1px;background:#ffffff;"></div>
<div style="left:389px;top:1090px;width:1px;height:27px;background:#ffffff;"></div>
<div style="left:393px;top:1090px;width:1292px;height:1px;background:#a0a0a0;"></div>
<div style="left:393px;top:1090px;width:1px;height:27px;background:#a0a0a0;"></div>
<div style="left:393px;top:1116px;width:1292px;height:1px;background:#ffffff;"></div>
<div style="left:1684px;top:1090px;width:1px;height:27px;background:#ffffff;"></div>
<div style="left:1689px;top:1090px;width:30px;height:1px;background:#a0a0a0;"></div>
<div style="left:1689px;top:1090px;width:1px;height:27px;background:#a0a0a0;"></div>
<div style="left:1689px;top:1116px;width:30px;height:1px;background:#ffffff;"></div>
<div style="left:1718px;top:1090px;width:1px;height:27px;background:#ffffff;"></div>
<div style="left:1723px;top:1090px;width:30px;height:1px;background:#a0a0a0;"></div>
<div style="left:1723px;top:1090px;width:1px;height:27px;background:#a0a0a0;"></div>
<div style="left:1723px;top:1116px;width:30px;height:1px;background:#ffffff;"></div>
<div style="left:1752px;top:1090px;width:1px;height:27px;background:#ffffff;"></div>
<div style="left:91px;top:1089px;width:1px;height:28px;background:#a0a0a0;"></div>
<div style="left:391px;top:1089px;width:1px;height:28px;background:#a0a0a0;"></div>
<div style="left:1686px;top:1089px;width:1px;height:28px;background:#a0a0a0;"></div>
<div style="left:1720px;top:1089px;width:1px;height:28px;background:#a0a0a0;"></div>
<div class="t" style="top:1094.84px;font-size:12px;line-height:16px;color:#000;letter-spacing:-0.344px;left:1728.5px;">RU</div>
<svg style="left:1695px;top:1094px" width="18" height="18" viewBox="0 0 18 18"><rect x="1" y="1" width="16" height="16" rx="6" fill="#a0a0a0"/><rect x="8" y="4" width="2.4" height="2.4" fill="#e8e8e8"/><rect x="8" y="8" width="2.4" height="6" fill="#e8e8e8"/><line x1="1" y1="1" x2="17" y2="17" stroke="#f01020" stroke-width="1.8"/></svg>
<svg style="left:409px;top:1048px" width="14" height="15" viewBox="0 0 14 15"><defs><linearGradient id="yg" x1="0" y1="0" x2="1" y2="0"><stop offset="0" stop-color="#ffff00"/><stop offset=".5" stop-color="#90ff00"/><stop offset="1" stop-color="#30f000"/></linearGradient></defs><rect x="2.5" y="0.5" width="9" height="9" fill="url(#yg)" stroke="#808080" stroke-width="1"/><rect x="0.5" y="4.5" width="3" height="10" fill="#ffff70" stroke="#808080" stroke-width="1"/><rect x="3.6" y="5" width="1.6" height="9.5" fill="#50e820" /><rect x="5.5" y="8.5" width="8" height="6" fill="#b0f850" stroke="#808080" stroke-width="1"/><circle cx="4.5" cy="2.5" r="0.65" fill="#0878f0" stroke="none" stroke-width="1"/><circle cx="6.5" cy="2.5" r="0.65" fill="#0878f0" stroke="none" stroke-width="1"/><circle cx="4.5" cy="4.5" r="0.65" fill="#0878f0" stroke="none" stroke-width="1"/><circle cx="6.5" cy="4.5" r="0.65" fill="#0878f0" stroke="none" stroke-width="1"/><circle cx="4.5" cy="6.5" r="0.65" fill="#0878f0" stroke="none" stroke-width="1"/><circle cx="6.5" cy="6.5" r="0.65" fill="#0878f0" stroke="none" stroke-width="1"/><circle cx="4.4" cy="8.7" r="0.65" fill="#0878f0" stroke="none" stroke-width="1"/><circle cx="4.4" cy="10.5" r="0.65" fill="#0878f0" stroke="none" stroke-width="1"/><circle cx="4.4" cy="12.5" r="0.65" fill="#0878f0" stroke="none" stroke-width="1"/><circle cx="7.4" cy="10.4" r="0.65" fill="#0878f0" stroke="none" stroke-width="1"/><circle cx="11.4" cy="10.4" r="0.65" fill="#0878f0" stroke="none" stroke-width="1"/><circle cx="7.4" cy="12.6" r="0.65" fill="#0878f0" stroke="none" stroke-width="1"/><circle cx="11.4" cy="12.6" r="0.65" fill="#0878f0" stroke="none" stroke-width="1"/><circle cx="9.4" cy="3.5" r="0.55" fill="#ffffff" stroke="none" stroke-width="1"/><circle cx="9.4" cy="6.5" r="0.55" fill="#ffffff" stroke="none" stroke-width="1"/><circle cx="9.4" cy="10.4" r="0.55" fill="#ffffff" stroke="none" stroke-width="1"/><circle cx="9.4" cy="12.6" r="0.55" fill="#ffffff" stroke="none" stroke-width="1"/><circle cx="4.4" cy="11.6" r="0.55" fill="#ffffff" stroke="none" stroke-width="1"/></svg>
<svg style="left:508px;top:1048px" width="16" height="14" viewBox="0 0 16 14"><defs><linearGradient id="bd0f8e0" x1="0" y1="0" x2="0" y2="1"><stop offset="0" stop-color="#d0f8e0"/><stop offset="1" stop-color="#f8fcfa"/></linearGradient></defs><rect x="0.5" y="0.5" width="15" height="12.5" fill="url(#bd0f8e0)" stroke="#b0b0b0" stroke-width="1"/><text x="3" y="11.8" font-family="Liberation Sans, sans-serif" font-size="12.5" fill="#101010" text-anchor="start" textLength="10" lengthAdjust="spacingAndGlyphs">%</text></svg>
<svg style="left:609px;top:1047px" width="15" height="16" viewBox="0 0 15 16"><rect x="0.5" y="5.5" width="3" height="10" fill="#ffff70" stroke="#808080" stroke-width="1"/><rect x="3.6" y="9" width="1.6" height="6.5" fill="#50e820" /><rect x="5.5" y="11" width="8" height="4.5" fill="#90f040" stroke="#808080" stroke-width="1"/><circle cx="7.4" cy="13" r="0.6" fill="#0878f0" stroke="none" stroke-width="1"/><circle cx="9.4" cy="13" r="0.6" fill="#0878f0" stroke="none" stroke-width="1"/><circle cx="11.4" cy="13" r="0.6" fill="#0878f0" stroke="none" stroke-width="1"/><rect x="1.5" y="1" width="1.2" height="4" fill="#f0e020" /><text x="5" y="10" font-family="Liberation Sans, sans-serif" font-size="11.5" fill="#202020" text-anchor="start" textLength="9" lengthAdjust="spacingAndGlyphs">%</text></svg>
<svg style="left:708px;top:1048px" width="16" height="14" viewBox="0 0 16 14"><defs><linearGradient id="bb8e0f8" x1="0" y1="0" x2="0" y2="1"><stop offset="0" stop-color="#b8e0f8"/><stop offset="1" stop-color="#f4fafc"/></linearGradient></defs><rect x="0.5" y="0.5" width="15" height="12.5" fill="url(#bb8e0f8)" stroke="#b0b0b0" stroke-width="1"/><text x="1" y="11.8" font-family="Liberation Sans, sans-serif" font-size="12" fill="#101010" text-anchor="start" textLength="14.5" lengthAdjust="spacingAndGlyphs">КС-6</text></svg>
<svg style="left:808px;top:1048px" width="16" height="14" viewBox="0 0 16 14"><defs><linearGradient id="bc8f8c8" x1="0" y1="0" x2="0" y2="1"><stop offset="0" stop-color="#c8f8c8"/><stop offset="1" stop-color="#f8fcfa"/></linearGradient></defs><rect x="0.5" y="0.5" width="15" height="12.5" fill="url(#bc8f8c8)" stroke="#b0b0b0" stroke-width="1"/><text x="1" y="11.8" font-family="Liberation Sans, sans-serif" font-size="12" fill="#101010" text-anchor="start" textLength="14.5" lengthAdjust="spacingAndGlyphs">М29</text></svg>
<svg style="left:908px;top:1048px" width="16" height="14" viewBox="0 0 16 14"><defs><linearGradient id="bc8dcf8" x1="0" y1="0" x2="0" y2="1"><stop offset="0" stop-color="#c8dcf8"/><stop offset="1" stop-color="#f8fcfa"/></linearGradient></defs><rect x="0.5" y="0.5" width="15" height="12.5" fill="url(#bc8dcf8)" stroke="#b0b0b0" stroke-width="1"/><text x="2.5" y="11.8" font-family="Liberation Sans, sans-serif" font-size="12" fill="#101010" text-anchor="start" textLength="11" lengthAdjust="spacingAndGlyphs">РР</text></svg>
<svg style="left:1008px;top:1048px" width="16" height="14" viewBox="0 0 16 14"><defs><linearGradient id="bf8c8c0" x1="0" y1="0" x2="0" y2="1"><stop offset="0" stop-color="#f8c8c0"/><stop offset="1" stop-color="#fcf4f2"/></linearGradient></defs><rect x="0.5" y="0.5" width="15" height="12.5" fill="url(#bf8c8c0)" stroke="#b0b0b0" stroke-width="1"/><text x="1" y="11.8" font-family="Liberation Sans, sans-serif" font-size="12" fill="#101010" text-anchor="start" textLength="14.5" lengthAdjust="spacingAndGlyphs">КС-3</text></svg>
<div style="left:7px;top:156px;width:345px;height:909px;overflow:hidden;"><div style="left:-7px;top:-156px;width:400px;height:1100px;">
<div style="left:34px;top:172px;width:1px;height:233px;background:repeating-linear-gradient(180deg,#808080 0 1px,transparent 1px 2px);"></div>
<div style="left:53px;top:188px;width:1px;height:169px;background:repeating-linear-gradient(180deg,#808080 0 1px,transparent 1px 2px);"></div>
<div style="left:72px;top:220px;width:1px;height:121px;background:repeating-linear-gradient(180deg,#808080 0 1px,transparent 1px 2px);"></div>
<div style="left:91px;top:236px;width:1px;height:89px;background:repeating-linear-gradient(180deg,#808080 0 1px,transparent 1px 2px);"></div>
<div style="left:21px;top:164px;width:5px;height:1px;background:repeating-linear-gradient(90deg,#808080 0 1px,transparent 1px 2px);"></div>
<div style="left:11px;top:160px;width:9px;height:9px;background:#ffffff;border:1px solid #808080;"></div>
<div style="left:13px;top:164px;width:5px;height:1px;background:#000;"></div>
<svg style="left:26px;top:156px" width="16" height="16" viewBox="0 0 16 16"><path d="M5.5 2 L0 13.7 L9.5 13.7 Z" fill="#2f7ad8" stroke="#1c58b0" stroke-width="0.8" /><rect x="8.7" y="7.1" width="6.3" height="6.7" fill="#7cc030" /><rect x="9.4" y="7.8" width="5" height="1" fill="#a4e058" /><defs><radialGradient id="rb" cx=".4" cy=".3" r=".75"><stop offset="0" stop-color="#ffc8b8"/><stop offset=".45" stop-color="#f83818"/><stop offset="1" stop-color="#c81000"/></radialGradient></defs><circle cx="7" cy="11" r="3.9" fill="url(#rb)" stroke="none" stroke-width="1"/></svg>
<div class="t" style="top:155.84px;font-size:12px;line-height:16px;color:#000;transform:scaleX(0.9282);transform-origin:left 50%;left:47.3px;">Проекты</div>
<div style="left:40px;top:180px;width:5px;height:1px;background:repeating-linear-gradient(90deg,#808080 0 1px,transparent 1px 2px);"></div>
<div style="left:30px;top:176px;width:9px;height:9px;background:#ffffff;border:1px solid #808080;"></div>
<div style="left:32px;top:180px;width:5px;height:1px;background:#000;"></div>
<svg style="left:45px;top:172px" width="16" height="16" viewBox="0 0 16 16"><rect x="1" y="6" width="5" height="10" fill="#1a70e0" /><rect x="6" y="4" width="5" height="12" fill="#1a70e0" /><rect x="11" y="8.2" width="5" height="7.8" fill="#1a70e0" /><rect x="2.2" y="7.5" width="2.6" height="1" fill="#c8dcff" /><rect x="2.2" y="9.5" width="2.6" height="1" fill="#c8dcff" /><rect x="2.2" y="11.5" width="2.6" height="1" fill="#c8dcff" /><rect x="2.2" y="13.5" width="2.6" height="1" fill="#c8dcff" /><rect x="12.2" y="9.7" width="2.6" height="1" fill="#c8dcff" /><rect x="12.2" y="11.5" width="2.6" height="1" fill="#c8dcff" /><rect x="12.2" y="13.5" width="2.6" height="1" fill="#c8dcff" /><rect x="7.2" y="5.5" width="2.6" height="1" fill="#d4e0ff" /><rect x="7.2" y="7.5" width="2.6" height="1" fill="#d4e0ff" /><rect x="7.2" y="9.5" width="2.6" height="1" fill="#d4e0ff" /><rect x="7.2" y="11.5" width="2.6" height="1" fill="#d4e0ff" /><rect x="7.2" y="13.5" width="2.6" height="1" fill="#d4e0ff" /><rect x="6" y="1" width="1" height="3.2" fill="#303030" /><path d="M7 1 L11 2.1 L7 3.2 Z" fill="#f01818" stroke="none" stroke-width="1" /></svg>
<div class="t" style="top:171.84px;font-size:12px;line-height:16px;color:#000;transform:scaleX(0.9224);transform-origin:left 50%;left:65.8px;">256-02-2025 [Здание спортивного комплекса]</div>
<div class="t" style="top:171.84px;font-size:12px;line-height:16px;color:#0000ff;transform:scaleX(0.8928);transform-origin:left 50%;left:305.5px;">[4]</div>
<div style="left:59px;top:196px;width:5px;height:1px;background:repeating-linear-gradient(90deg,#808080 0 1px,transparent 1px 2px);"></div>
<div style="left:49px;top:192px;width:9px;height:9px;background:#ffffff;border:1px solid #808080;"></div>
<div style="left:51px;top:196px;width:5px;height:1px;background:#000;"></div>
<div style="left:53px;top:194px;width:1px;height:5px;background:#000;"></div>
<svg style="left:64px;top:188px" width="16" height="16" viewBox="0 0 16 16"><rect x="0" y="1" width="12" height="1" fill="#909090" /><rect x="1" y="1" width="1" height="15" fill="#909090" /><rect x="3" y="1" width="1" height="15" fill="#909090" /><rect x="1" y="3.5" width="3" height="1" fill="#909090" /><rect x="1" y="6.5" width="3" height="1" fill="#909090" /><rect x="1" y="9.5" width="3" height="1" fill="#909090" /><rect x="1" y="12.5" width="3" height="1" fill="#909090" /><rect x="1" y="15" width="3" height="1" fill="#909090" /><rect x="3" y="15" width="3" height="1" fill="#909090" /><path d="M10 2 L5 8.5 L15 8.5 Z" fill="#a868f0" stroke="none" stroke-width="1" /><path d="M12 0.5 L14 1 L14 5 L16 7 L16 14 L13 14 L13 6 L12 4 Z" fill="#a868f0" stroke="none" stroke-width="1" /><circle cx="1.5" cy="0.8" r="1.1" fill="#a868f0" stroke="none" stroke-width="1"/><path d="M10 2 L4.8 8.3 M10 2 L15.2 8.3" fill="none" stroke="#802838" stroke-width="0.9" /><rect x="4" y="8" width="11.3" height="1.8" fill="#f07800" /><rect x="4" y="9.8" width="11.3" height="0.9" fill="#a03828" /><rect x="7" y="11" width="4" height="5" fill="#2890ff" /><rect x="12" y="11" width="4" height="5" fill="#2890ff" /><rect x="7.8" y="11.8" width="0.9" height="0.9" fill="#e0f0ff" /><rect x="7.8" y="13.8" width="0.9" height="0.9" fill="#e0f0ff" /><rect x="9.6" y="11.8" width="0.9" height="0.9" fill="#e0f0ff" /><rect x="9.6" y="13.8" width="0.9" height="0.9" fill="#e0f0ff" /><rect x="12.8" y="11.8" width="0.9" height="0.9" fill="#e0f0ff" /><rect x="12.8" y="13.8" width="0.9" height="0.9" fill="#e0f0ff" /><rect x="14.6" y="11.8" width="0.9" height="0.9" fill="#e0f0ff" /><rect x="14.6" y="13.8" width="0.9" height="0.9" fill="#e0f0ff" /></svg>
<div class="t" style="top:187.84px;font-size:12px;line-height:16px;color:#000;transform:scaleX(0.9140);transform-origin:left 50%;left:84.8px;">ОСР-01-01  [Подготовка территории строительства]</div>
<div style="left:59px;top:212px;width:5px;height:1px;background:repeating-linear-gradient(90deg,#808080 0 1px,transparent 1px 2px);"></div>
<div style="left:49px;top:208px;width:9px;height:9px;background:#ffffff;border:1px solid #808080;"></div>
<div style="left:51px;top:212px;width:5px;height:1px;background:#000;"></div>
<svg style="left:64px;top:204px" width="16" height="16" viewBox="0 0 16 16"><rect x="0" y="1" width="12" height="1" fill="#909090" /><rect x="1" y="1" width="1" height="15" fill="#909090" /><rect x="3" y="1" width="1" height="15" fill="#909090" /><rect x="1" y="3.5" width="3" height="1" fill="#909090" /><rect x="1" y="6.5" width="3" height="1" fill="#909090" /><rect x="1" y="9.5" width="3" height="1" fill="#909090" /><rect x="1" y="12.5" width="3" height="1" fill="#909090" /><rect x="1" y="15" width="3" height="1" fill="#909090" /><rect x="3" y="15" width="3" height="1" fill="#909090" /><path d="M10 2 L5 8.5 L15 8.5 Z" fill="#a868f0" stroke="none" stroke-width="1" /><path d="M12 0.5 L14 1 L14 5 L16 7 L16 14 L13 14 L13 6 L12 4 Z" fill="#a868f0" stroke="none" stroke-width="1" /><circle cx="1.5" cy="0.8" r="1.1" fill="#a868f0" stroke="none" stroke-width="1"/><path d="M10 2 L4.8 8.3 M10 2 L15.2 8.3" fill="none" stroke="#802838" stroke-width="0.9" /><rect x="4" y="8" width="11.3" height="1.8" fill="#f07800" /><rect x="4" y="9.8" width="11.3" height="0.9" fill="#a03828" /><rect x="7" y="11" width="4" height="5" fill="#2890ff" /><rect x="12" y="11" width="4" height="5" fill="#2890ff" /><rect x="7.8" y="11.8" width="0.9" height="0.9" fill="#e0f0ff" /><rect x="7.8" y="13.8" width="0.9" height="0.9" fill="#e0f0ff" /><rect x="9.6" y="11.8" width="0.9" height="0.9" fill="#e0f0ff" /><rect x="9.6" y="13.8" width="0.9" height="0.9" fill="#e0f0ff" /><rect x="12.8" y="11.8" width="0.9" height="0.9" fill="#e0f0ff" /><rect x="12.8" y="13.8" width="0.9" height="0.9" fill="#e0f0ff" /><rect x="14.6" y="11.8" width="0.9" height="0.9" fill="#e0f0ff" /><rect x="14.6" y="13.8" width="0.9" height="0.9" fill="#e0f0ff" /></svg>
<div class="t" style="top:203.84px;font-size:12px;line-height:16px;color:#000;transform:scaleX(0.9101);transform-origin:left 50%;left:84.8px;">ОСР-02-01 [Основные объекты строительства]</div>
<div class="t" style="top:203.84px;font-size:12px;line-height:16px;color:#0000ff;transform:scaleX(0.8928);transform-origin:left 50%;left:330.4px;">[2]</div>
<div style="left:78px;top:228px;width:5px;height:1px;background:repeating-linear-gradient(90deg,#808080 0 1px,transparent 1px 2px);"></div>
<div style="left:68px;top:224px;width:9px;height:9px;background:#ffffff;border:1px solid #808080;"></div>
<div style="left:70px;top:228px;width:5px;height:1px;background:#000;"></div>
<svg style="left:83px;top:220px" width="16" height="16" viewBox="0 0 16 16"><path d="M0.3 7 L0.3 10.5 L10.8 16 L12.6 16 L15.8 9.6 L15.5 8 L10.5 12.3 Z" fill="#eceff6" stroke="#a8b4c8" stroke-width="0.7" /><path d="M0.3 7 L5.3 0 L8 0 L15.5 8 L10.5 12.3 Z" fill="#3ca46c" stroke="none" stroke-width="1" /><path d="M0.3 7 L5.3 0 L8 0" fill="none" stroke="#2c8c58" stroke-width="0.8" /><path d="M6.8 3 L9 4.3" fill="none" stroke="#e8fff4" stroke-width="1.7" stroke-linecap="round"/></svg>
<div style="left:102px;top:220px;width:174px;height:16px;background:#0078d7;border:1px dotted #ffb060;"></div>
<div class="t" style="top:219.84px;font-size:12px;line-height:16px;color:#fff;transform:scaleX(0.9112);transform-origin:left 50%;left:105px;">ЛС-02-01 [Устройство котлована]</div>
<div style="left:97px;top:244px;width:5px;height:1px;background:repeating-linear-gradient(90deg,#808080 0 1px,transparent 1px 2px);"></div>
<div style="left:87px;top:240px;width:9px;height:9px;background:#ffffff;border:1px solid #808080;"></div>
<div style="left:89px;top:244px;width:5px;height:1px;background:#000;"></div>
<div style="left:91px;top:242px;width:1px;height:5px;background:#000;"></div>
<svg style="left:102px;top:236px" width="16" height="16" viewBox="0 0 16 16"><defs><linearGradient id="fg2" x1="0" y1="0" x2="1" y2="1"><stop offset="0" stop-color="#1e90ff"/><stop offset="1" stop-color="#48e8ff"/></linearGradient></defs><path d="M0.5 2.5 L6 1.5 L8 3.5 L15.5 3.5 L15.5 14.5 L0.5 14.5 Z" fill="#a8b8c8" stroke="#a0a0a8" stroke-width="1" /><path d="M1 3.5 L6 3 L7.5 4.5 L15 4.5 L15 14 L1 14 Z" fill="url(#fg2)" stroke="none" stroke-width="1" /></svg>
<div class="t" style="top:235.84px;font-size:12px;line-height:16px;color:#000;transform:scaleX(0.9529);transform-origin:left 50%;left:122.8px;">СТРУКТУРА</div>
<div style="left:97px;top:260px;width:5px;height:1px;background:repeating-linear-gradient(90deg,#808080 0 1px,transparent 1px 2px);"></div>
<div style="left:87px;top:256px;width:9px;height:9px;background:#ffffff;border:1px solid #808080;"></div>
<div style="left:89px;top:260px;width:5px;height:1px;background:#000;"></div>
<div style="left:91px;top:258px;width:1px;height:5px;background:#000;"></div>
<svg style="left:102px;top:252px" width="16" height="16" viewBox="0 0 16 16"><defs><linearGradient id="fg2" x1="0" y1="0" x2="1" y2="1"><stop offset="0" stop-color="#1e90ff"/><stop offset="1" stop-color="#48e8ff"/></linearGradient></defs><path d="M0.5 2.5 L6 1.5 L8 3.5 L15.5 3.5 L15.5 14.5 L0.5 14.5 Z" fill="#a8b8c8" stroke="#a0a0a8" stroke-width="1" /><path d="M1 3.5 L6 3 L7.5 4.5 L15 4.5 L15 14 L1 14 Z" fill="url(#fg2)" stroke="none" stroke-width="1" /></svg>
<div class="t" style="top:251.84px;font-size:12px;line-height:16px;color:#000;transform:scaleX(0.8992);transform-origin:left 50%;left:122.8px;">СМЕТЫ</div>
<div style="left:97px;top:276px;width:5px;height:1px;background:repeating-linear-gradient(90deg,#808080 0 1px,transparent 1px 2px);"></div>
<div style="left:87px;top:272px;width:9px;height:9px;background:#ffffff;border:1px solid #808080;"></div>
<div style="left:89px;top:276px;width:5px;height:1px;background:#000;"></div>
<div style="left:91px;top:274px;width:1px;height:5px;background:#000;"></div>
<svg style="left:102px;top:268px" width="16" height="16" viewBox="0 0 16 16"><defs><linearGradient id="fg2" x1="0" y1="0" x2="1" y2="1"><stop offset="0" stop-color="#1e90ff"/><stop offset="1" stop-color="#48e8ff"/></linearGradient></defs><path d="M0.5 2.5 L6 1.5 L8 3.5 L15.5 3.5 L15.5 14.5 L0.5 14.5 Z" fill="#a8b8c8" stroke="#a0a0a8" stroke-width="1" /><path d="M1 3.5 L6 3 L7.5 4.5 L15 4.5 L15 14 L1 14 Z" fill="url(#fg2)" stroke="none" stroke-width="1" /></svg>
<div class="t" style="top:267.84px;font-size:12px;line-height:16px;color:#000;transform:scaleX(0.9154);transform-origin:left 50%;left:122.8px;">ВЫПОЛНЕНИЯ</div>
<div style="left:91px;top:292px;width:11px;height:1px;background:repeating-linear-gradient(90deg,#808080 0 1px,transparent 1px 2px);"></div>
<svg style="left:102px;top:284px" width="16" height="16" viewBox="0 0 16 16"><defs><linearGradient id="fg2" x1="0" y1="0" x2="1" y2="1"><stop offset="0" stop-color="#1e90ff"/><stop offset="1" stop-color="#48e8ff"/></linearGradient></defs><path d="M0.5 2.5 L6 1.5 L8 3.5 L15.5 3.5 L15.5 14.5 L0.5 14.5 Z" fill="#a8b8c8" stroke="#a0a0a8" stroke-width="1" /><path d="M1 3.5 L6 3 L7.5 4.5 L15 4.5 L15 14 L1 14 Z" fill="url(#fg2)" stroke="none" stroke-width="1" /></svg>
<div class="t" style="top:283.84px;font-size:12px;line-height:16px;color:#000;transform:scaleX(0.8997);transform-origin:left 50%;left:122.8px;">М-29</div>
<div style="left:97px;top:308px;width:5px;height:1px;background:repeating-linear-gradient(90deg,#808080 0 1px,transparent 1px 2px);"></div>
<div style="left:87px;top:304px;width:9px;height:9px;background:#ffffff;border:1px solid #808080;"></div>
<div style="left:89px;top:308px;width:5px;height:1px;background:#000;"></div>
<div style="left:91px;top:306px;width:1px;height:5px;background:#000;"></div>
<svg style="left:102px;top:300px" width="16" height="16" viewBox="0 0 16 16"><defs><linearGradient id="fg2" x1="0" y1="0" x2="1" y2="1"><stop offset="0" stop-color="#1e90ff"/><stop offset="1" stop-color="#48e8ff"/></linearGradient></defs><path d="M0.5 2.5 L6 1.5 L8 3.5 L15.5 3.5 L15.5 14.5 L0.5 14.5 Z" fill="#a8b8c8" stroke="#a0a0a8" stroke-width="1" /><path d="M1 3.5 L6 3 L7.5 4.5 L15 4.5 L15 14 L1 14 Z" fill="url(#fg2)" stroke="none" stroke-width="1" /></svg>
<div class="t" style="top:299.84px;font-size:12px;line-height:16px;color:#000;transform:scaleX(0.9153);transform-origin:left 50%;left:122.8px;">РЕСУРСНЫЕ РАСЧЕТЫ</div>
<div style="left:97px;top:324px;width:5px;height:1px;background:repeating-linear-gradient(90deg,#808080 0 1px,transparent 1px 2px);"></div>
<div style="left:87px;top:320px;width:9px;height:9px;background:#ffffff;border:1px solid #808080;"></div>
<div style="left:89px;top:324px;width:5px;height:1px;background:#000;"></div>
<div style="left:91px;top:322px;width:1px;height:5px;background:#000;"></div>
<svg style="left:102px;top:316px" width="16" height="16" viewBox="0 0 16 16"><defs><linearGradient id="fg2" x1="0" y1="0" x2="1" y2="1"><stop offset="0" stop-color="#1e90ff"/><stop offset="1" stop-color="#48e8ff"/></linearGradient></defs><path d="M0.5 2.5 L6 1.5 L8 3.5 L15.5 3.5 L15.5 14.5 L0.5 14.5 Z" fill="#a8b8c8" stroke="#a0a0a8" stroke-width="1" /><path d="M1 3.5 L6 3 L7.5 4.5 L15 4.5 L15 14 L1 14 Z" fill="url(#fg2)" stroke="none" stroke-width="1" /></svg>
<div class="t" style="top:315.84px;font-size:12px;line-height:16px;color:#000;transform:scaleX(0.8859);transform-origin:left 50%;left:122.8px;">КС-3</div>
<div style="left:78px;top:340px;width:5px;height:1px;background:repeating-linear-gradient(90deg,#808080 0 1px,transparent 1px 2px);"></div>
<div style="left:68px;top:336px;width:9px;height:9px;background:#ffffff;border:1px solid #808080;"></div>
<div style="left:70px;top:340px;width:5px;height:1px;background:#000;"></div>
<div style="left:72px;top:338px;width:1px;height:5px;background:#000;"></div>
<svg style="left:83px;top:332px" width="16" height="16" viewBox="0 0 16 16"><path d="M0.3 7 L0.3 10.5 L10.8 16 L12.6 16 L15.8 9.6 L15.5 8 L10.5 12.3 Z" fill="#eceff6" stroke="#a8b4c8" stroke-width="0.7" /><path d="M0.3 7 L5.3 0 L8 0 L15.5 8 L10.5 12.3 Z" fill="#3ca46c" stroke="none" stroke-width="1" /><path d="M0.3 7 L5.3 0 L8 0" fill="none" stroke="#2c8c58" stroke-width="0.8" /><path d="M6.8 3 L9 4.3" fill="none" stroke="#e8fff4" stroke-width="1.7" stroke-linecap="round"/></svg>
<div class="t" style="top:331.84px;font-size:12px;line-height:16px;color:#000;transform:scaleX(0.9184);transform-origin:left 50%;left:103.8px;">ЛС-02-02 [Фундамент]</div>
<div style="left:59px;top:356px;width:5px;height:1px;background:repeating-linear-gradient(90deg,#808080 0 1px,transparent 1px 2px);"></div>
<div style="left:49px;top:352px;width:9px;height:9px;background:#ffffff;border:1px solid #808080;"></div>
<div style="left:51px;top:356px;width:5px;height:1px;background:#000;"></div>
<div style="left:53px;top:354px;width:1px;height:5px;background:#000;"></div>
<svg style="left:64px;top:348px" width="16" height="16" viewBox="0 0 16 16"><rect x="0" y="1" width="12" height="1" fill="#909090" /><rect x="1" y="1" width="1" height="15" fill="#909090" /><rect x="3" y="1" width="1" height="15" fill="#909090" /><rect x="1" y="3.5" width="3" height="1" fill="#909090" /><rect x="1" y="6.5" width="3" height="1" fill="#909090" /><rect x="1" y="9.5" width="3" height="1" fill="#909090" /><rect x="1" y="12.5" width="3" height="1" fill="#909090" /><rect x="1" y="15" width="3" height="1" fill="#909090" /><rect x="3" y="15" width="3" height="1" fill="#909090" /><path d="M10 2 L5 8.5 L15 8.5 Z" fill="#a868f0" stroke="none" stroke-width="1" /><path d="M12 0.5 L14 1 L14 5 L16 7 L16 14 L13 14 L13 6 L12 4 Z" fill="#a868f0" stroke="none" stroke-width="1" /><circle cx="1.5" cy="0.8" r="1.1" fill="#a868f0" stroke="none" stroke-width="1"/><path d="M10 2 L4.8 8.3 M10 2 L15.2 8.3" fill="none" stroke="#802838" stroke-width="0.9" /><rect x="4" y="8" width="11.3" height="1.8" fill="#f07800" /><rect x="4" y="9.8" width="11.3" height="0.9" fill="#a03828" /><rect x="7" y="11" width="4" height="5" fill="#2890ff" /><rect x="12" y="11" width="4" height="5" fill="#2890ff" /><rect x="7.8" y="11.8" width="0.9" height="0.9" fill="#e0f0ff" /><rect x="7.8" y="13.8" width="0.9" height="0.9" fill="#e0f0ff" /><rect x="9.6" y="11.8" width="0.9" height="0.9" fill="#e0f0ff" /><rect x="9.6" y="13.8" width="0.9" height="0.9" fill="#e0f0ff" /><rect x="12.8" y="11.8" width="0.9" height="0.9" fill="#e0f0ff" /><rect x="12.8" y="13.8" width="0.9" height="0.9" fill="#e0f0ff" /><rect x="14.6" y="11.8" width="0.9" height="0.9" fill="#e0f0ff" /><rect x="14.6" y="13.8" width="0.9" height="0.9" fill="#e0f0ff" /></svg>
<div class="t" style="top:347.84px;font-size:12px;line-height:16px;color:#000;transform:scaleX(0.9027);transform-origin:left 50%;left:84.8px;">ОСР-03-01 [Объекты подсобного и обслуживающего назначения]</div>
<div style="left:40px;top:372px;width:5px;height:1px;background:repeating-linear-gradient(90deg,#808080 0 1px,transparent 1px 2px);"></div>
<div style="left:30px;top:368px;width:9px;height:9px;background:#ffffff;border:1px solid #808080;"></div>
<div style="left:32px;top:372px;width:5px;height:1px;background:#000;"></div>
<div style="left:34px;top:370px;width:1px;height:5px;background:#000;"></div>
<svg style="left:45px;top:364px" width="16" height="16" viewBox="0 0 16 16"><defs><linearGradient id="fg3" x1="0" y1="1" x2="1" y2="0"><stop offset="0" stop-color="#ffff10"/><stop offset="1" stop-color="#ff9800"/></linearGradient></defs><path d="M0.5 2.5 L6 1.5 L8 3.5 L15.5 3.5 L15.5 14.5 L0.5 14.5 Z" fill="#d8c890" stroke="#b8a870" stroke-width="1" /><path d="M1 3.5 L6 3 L7.5 4.5 L15 4.5 L15 14 L1 14 Z" fill="url(#fg3)" stroke="none" stroke-width="1" /></svg>
<div class="t" style="top:363.84px;font-size:12px;line-height:16px;color:#000;transform:scaleX(0.9342);transform-origin:left 50%;left:65.8px;">Новая папка [Новая папка]</div>
<div class="t" style="top:363.84px;font-size:12px;line-height:16px;color:#0000ff;transform:scaleX(0.9050);transform-origin:left 50%;left:212.3px;">[36]</div>
<div style="left:40px;top:388px;width:5px;height:1px;background:repeating-linear-gradient(90deg,#808080 0 1px,transparent 1px 2px);"></div>
<div style="left:30px;top:384px;width:9px;height:9px;background:#ffffff;border:1px solid #808080;"></div>
<div style="left:32px;top:388px;width:5px;height:1px;background:#000;"></div>
<div style="left:34px;top:386px;width:1px;height:5px;background:#000;"></div>
<svg style="left:45px;top:380px" width="16" height="16" viewBox="0 0 16 16"><defs><linearGradient id="exg" x1="0" y1="0" x2="0" y2="1"><stop offset="0" stop-color="#fff4b0"/><stop offset="1" stop-color="#ffd848"/></linearGradient></defs><path d="M3 1 H6.5 L7.5 2.2 H13.5 V9.5 H3 Z" fill="url(#exg)" stroke="#b8a888" stroke-width="0.8" /><path d="M0.5 7.5 Q3 7.5 5 9 L9 8.5 Q11 7.2 13.5 8 L14 11 Q9 14.5 5.5 13.5 Q2 12 0.5 7.5 Z" fill="#f4a860" stroke="#c87830" stroke-width="0.7" /><path d="M5.5 10.5 Q8 11.5 10.5 10" fill="none" stroke="#fce0b8" stroke-width="1" /><rect x="14.3" y="6.5" width="1.3" height="7" fill="#384050" /></svg>
<div class="t" style="top:379.84px;font-size:12px;line-height:16px;color:#000;transform:scaleX(0.8798);transform-origin:left 50%;left:65.8px;">ОБМЕН</div>
<div class="t" style="top:379.84px;font-size:12px;line-height:16px;color:#0000ff;transform:scaleX(0.9004);transform-origin:left 50%;left:112.6px;">[1]</div>
<div style="left:40px;top:404px;width:5px;height:1px;background:repeating-linear-gradient(90deg,#808080 0 1px,transparent 1px 2px);"></div>
<div style="left:30px;top:400px;width:9px;height:9px;background:#ffffff;border:1px solid #808080;"></div>
<div style="left:32px;top:404px;width:5px;height:1px;background:#000;"></div>
<div style="left:34px;top:402px;width:1px;height:5px;background:#000;"></div>
<svg style="left:45px;top:396px" width="16" height="16" viewBox="0 0 16 16"><path d="M3.5 5.5 Q3.5 1 7.5 1 Q11.5 1 11.5 5.5 Z" fill="#e8f0f8" stroke="#a0a8b8" stroke-width="0.7" /><rect x="2" y="7" width="11" height="1.4" fill="#505860" /><rect x="3.5" y="5.5" width="8" height="1.5" fill="#687078" /><rect x="4" y="8.4" width="7.5" height="6.2" fill="#d8dce0" /><rect x="4" y="8.6" width="1.2" height="1.2" fill="#384048" /><rect x="6.4" y="8.6" width="1.2" height="1.2" fill="#384048" /><rect x="8.8" y="8.6" width="1.2" height="1.2" fill="#384048" /><rect x="5.2" y="9.8" width="1.2" height="1.2" fill="#384048" /><rect x="7.6" y="9.8" width="1.2" height="1.2" fill="#384048" /><rect x="10" y="9.8" width="1.2" height="1.2" fill="#384048" /><rect x="4" y="11" width="1.2" height="1.2" fill="#384048" /><rect x="6.4" y="11" width="1.2" height="1.2" fill="#384048" /><rect x="8.8" y="11" width="1.2" height="1.2" fill="#384048" /><rect x="5.2" y="12.2" width="1.2" height="1.2" fill="#384048" /><rect x="7.6" y="12.2" width="1.2" height="1.2" fill="#384048" /><rect x="10" y="12.2" width="1.2" height="1.2" fill="#384048" /><rect x="4" y="13.4" width="1.2" height="1.2" fill="#384048" /><rect x="6.4" y="13.4" width="1.2" height="1.2" fill="#384048" /><rect x="8.8" y="13.4" width="1.2" height="1.2" fill="#384048" /><rect x="3" y="14.6" width="9.5" height="1.4" fill="#384048" /></svg>
<div class="t" style="top:395.84px;font-size:12px;line-height:16px;color:#000;transform:scaleX(0.9247);transform-origin:left 50%;left:65.8px;">КОРЗИНА</div>
</div></div>
<div style="left:246px;top:230px;width:336px;height:612px;background:#f0f0f0;border:1px solid #a0a0a0;"></div>
<div class="t" style="top:235.84px;font-size:12px;line-height:16px;color:#a0a0a0;font-weight:bold;letter-spacing:-0.339px;left:271px;">Открыть</div>
<div class="t" style="top:256.84px;font-size:12px;line-height:16px;color:#000;letter-spacing:-0.072px;left:271px;">Найти объект</div>
<div style="left:250px;top:279px;width:328px;height:1px;background:#a0a0a0;"></div>
<div style="left:250px;top:280px;width:328px;height:1px;background:#ffffff;"></div>
<div class="t" style="top:285.84px;font-size:12px;line-height:16px;color:#000;letter-spacing:0.077px;left:271px;">Открыть справочник конъюнктурного анализа...</div>
<div style="left:250px;top:308px;width:328px;height:1px;background:#a0a0a0;"></div>
<div style="left:250px;top:309px;width:328px;height:1px;background:#ffffff;"></div>
<div class="t" style="top:314.84px;font-size:12px;line-height:16px;color:#000;letter-spacing:-0.147px;left:271px;">Добавить</div>
<svg style="left:567.5px;top:318px" width="5" height="8" viewBox="0 0 5 8"><path d="M0 0 L4.5 4 L0 8 Z" fill="#000" stroke="none" stroke-width="1" /></svg>
<div class="t" style="top:335.84px;font-size:12px;line-height:16px;color:#000;letter-spacing:-0.079px;left:271px;">Переименовать</div>
<div class="t" style="top:356.84px;font-size:12px;line-height:16px;color:#000;letter-spacing:-0.060px;left:271px;">Пересчитать объект в другую базу...</div>
<div class="t" style="top:377.84px;font-size:12px;line-height:16px;color:#000;letter-spacing:0.009px;left:271px;">Групповые операции ...</div>
<div style="left:250px;top:400px;width:328px;height:1px;background:#a0a0a0;"></div>
<div style="left:250px;top:401px;width:328px;height:1px;background:#ffffff;"></div>
<div class="t" style="top:406.84px;font-size:12px;line-height:16px;color:#000;letter-spacing:-0.096px;left:271px;">Объединение смет...</div>
<div class="t" style="top:427.84px;font-size:12px;line-height:16px;color:#000;letter-spacing:-0.120px;left:271px;">Создать объединенный акт...</div>
<div style="left:250px;top:450px;width:328px;height:1px;background:#a0a0a0;"></div>
<div style="left:250px;top:451px;width:328px;height:1px;background:#ffffff;"></div>
<div class="t" style="top:456.84px;font-size:12px;line-height:16px;color:#000;letter-spacing:-0.152px;left:271px;">Сравнить сметы...</div>
<div class="t" style="top:477.84px;font-size:12px;line-height:16px;color:#a0a0a0;letter-spacing:-0.257px;left:271px;">Экспертиза акта...</div>
<div style="left:250px;top:500px;width:328px;height:1px;background:#a0a0a0;"></div>
<div style="left:250px;top:501px;width:328px;height:1px;background:#ffffff;"></div>
<div class="t" style="top:506.84px;font-size:12px;line-height:16px;color:#000;letter-spacing:-0.302px;left:271px;">Удалить</div>
<div class="t" style="top:506.84px;font-size:12px;line-height:16px;color:#000;letter-spacing:0.042px;right:1190px;">Ctrl+Del</div>
<div class="t" style="top:527.84px;font-size:12px;line-height:16px;color:#a0a0a0;letter-spacing:-0.166px;left:271px;">Восстановить</div>
<div style="left:250px;top:550px;width:328px;height:1px;background:#a0a0a0;"></div>
<div style="left:250px;top:551px;width:328px;height:1px;background:#ffffff;"></div>
<div class="t" style="top:556.84px;font-size:12px;line-height:16px;color:#a0a0a0;letter-spacing:-0.166px;left:271px;">Переместить вверх</div>
<div class="t" style="top:577.84px;font-size:12px;line-height:16px;color:#a0a0a0;letter-spacing:-0.136px;left:271px;">Переместить вниз</div>
<div style="left:250px;top:600px;width:328px;height:1px;background:#a0a0a0;"></div>
<div style="left:250px;top:601px;width:328px;height:1px;background:#ffffff;"></div>
<div class="t" style="top:606.84px;font-size:12px;line-height:16px;color:#a0a0a0;letter-spacing:-0.002px;left:271px;">Копировать элемент структуры</div>
<div class="t" style="top:606.84px;font-size:12px;line-height:16px;color:#a0a0a0;letter-spacing:0.128px;right:1190px;">Ctrl+C</div>
<div class="t" style="top:627.84px;font-size:12px;line-height:16px;color:#a0a0a0;letter-spacing:-0.133px;left:271px;">Вставить элемент структуры</div>
<div class="t" style="top:627.84px;font-size:12px;line-height:16px;color:#a0a0a0;letter-spacing:0.062px;right:1190px;">Ctrl+V</div>
<div style="left:250px;top:650px;width:328px;height:1px;background:#a0a0a0;"></div>
<div style="left:250px;top:651px;width:328px;height:1px;background:#ffffff;"></div>
<div class="t" style="top:656.84px;font-size:12px;line-height:16px;color:#000;letter-spacing:-0.063px;left:271px;">Создать копию объекта</div>
<div style="left:250px;top:679px;width:328px;height:1px;background:#a0a0a0;"></div>
<div style="left:250px;top:680px;width:328px;height:1px;background:#ffffff;"></div>
<div class="t" style="top:685.84px;font-size:12px;line-height:16px;color:#000;letter-spacing:0.004px;left:271px;">Скопировать остатки выполнения в новый объект</div>
<div style="left:250px;top:708px;width:328px;height:1px;background:#a0a0a0;"></div>
<div style="left:250px;top:709px;width:328px;height:1px;background:#ffffff;"></div>
<div class="t" style="top:714.84px;font-size:12px;line-height:16px;color:#000;letter-spacing:-0.047px;left:271px;">Обновить</div>
<div style="left:250px;top:737px;width:328px;height:1px;background:#a0a0a0;"></div>
<div style="left:250px;top:738px;width:328px;height:1px;background:#ffffff;"></div>
<div class="t" style="top:743.84px;font-size:12px;line-height:16px;color:#000;letter-spacing:-0.016px;left:271px;">Экспорт</div>
<svg style="left:567.5px;top:747px" width="5" height="8" viewBox="0 0 5 8"><path d="M0 0 L4.5 4 L0 8 Z" fill="#000" stroke="none" stroke-width="1" /></svg>
<div style="left:269px;top:762px;width:307px;height:21px;background:#0078d7;"></div>
<div class="t" style="top:764.84px;font-size:12px;line-height:16px;color:#fff;letter-spacing:0.409px;left:271px;">Импорт</div>
<svg style="left:567.5px;top:768px" width="5" height="8" viewBox="0 0 5 8"><path d="M0 0 L4.5 4 L0 8 Z" fill="#fff" stroke="none" stroke-width="1" /></svg>
<div style="left:250px;top:787px;width:328px;height:1px;background:#a0a0a0;"></div>
<div style="left:250px;top:788px;width:328px;height:1px;background:#ffffff;"></div>
<div class="t" style="top:793.84px;font-size:12px;line-height:16px;color:#000;letter-spacing:-0.036px;left:271px;">Настроить это меню...</div>
<div style="left:250px;top:816px;width:328px;height:1px;background:#a0a0a0;"></div>
<div style="left:250px;top:817px;width:328px;height:1px;background:#ffffff;"></div>
<div class="t" style="top:822.84px;font-size:12px;line-height:16px;color:#000;letter-spacing:-0.852px;left:271px;">Вид</div>
<svg style="left:567.5px;top:826px" width="5" height="8" viewBox="0 0 5 8"><path d="M0 0 L4.5 4 L0 8 Z" fill="#000" stroke="none" stroke-width="1" /></svg>
<div style="left:576px;top:759px;width:331px;height:277px;background:#f0f0f0;border:1px solid #a0a0a0;"></div>
<div class="t" style="top:764.84px;font-size:12px;line-height:16px;color:#000;letter-spacing:-0.039px;left:601px;">Объектов (.sob/.sobx)</div>
<div style="left:580px;top:787px;width:323px;height:1px;background:#a0a0a0;"></div>
<div style="left:580px;top:788px;width:323px;height:1px;background:#ffffff;"></div>
<div class="t" style="top:793.84px;font-size:12px;line-height:16px;color:#000;letter-spacing:-0.217px;left:601px;">Объекта в формате XML</div>
<div style="left:580px;top:816px;width:323px;height:1px;background:#a0a0a0;"></div>
<div style="left:580px;top:817px;width:323px;height:1px;background:#ffffff;"></div>
<div class="t" style="top:822.84px;font-size:12px;line-height:16px;color:#000;letter-spacing:-0.192px;left:601px;">Акта (.sac/.sacx)</div>
<div class="t" style="top:843.84px;font-size:12px;line-height:16px;color:#000;letter-spacing:-0.198px;left:601px;">Акта в формате XML</div>
<div style="left:580px;top:866px;width:323px;height:1px;background:#a0a0a0;"></div>
<div style="left:580px;top:867px;width:323px;height:1px;background:#ffffff;"></div>
<div style="left:579px;top:870px;width:325px;height:21px;background:#0078d7;"></div>
<div class="t" style="top:872.84px;font-size:12px;line-height:16px;color:#fff;letter-spacing:-0.184px;left:601px;">КС-3 в формате XML</div>
<div style="left:580px;top:895px;width:323px;height:1px;background:#a0a0a0;"></div>
<div style="left:580px;top:896px;width:323px;height:1px;background:#ffffff;"></div>
<div class="t" style="top:901.84px;font-size:12px;line-height:16px;color:#000;letter-spacing:-0.059px;left:601px;">Локальной сметы (.slsx)</div>
<div class="t" style="top:922.84px;font-size:12px;line-height:16px;color:#000;letter-spacing:-0.068px;left:601px;">Локальной сметы в формате XML</div>
<div class="t" style="top:943.84px;font-size:12px;line-height:16px;color:#000;letter-spacing:0.030px;left:601px;">Локальной сметы со структурой проекта (.spxml)</div>
<div style="left:580px;top:966px;width:323px;height:1px;background:#a0a0a0;"></div>
<div style="left:580px;top:967px;width:323px;height:1px;background:#ffffff;"></div>
<div class="t" style="top:972.84px;font-size:12px;line-height:16px;color:#000;letter-spacing:-0.292px;left:601px;">Из АРПС</div>
<div class="t" style="top:993.84px;font-size:12px;line-height:16px;color:#000;letter-spacing:0.033px;left:601px;">Из "ГРАНД-Смета" (базисно-индексный метод)</div>
<div class="t" style="top:1014.84px;font-size:12px;line-height:16px;color:#000;letter-spacing:0.015px;left:601px;">Из "ГРАНД-Смета" (ресурсный метод)</div>
<svg style="left:0;top:0" width="1758" height="1119" viewBox="0 0 1758 1119"><line x1="166.3" y1="231.5" x2="387.4" y2="741.3" stroke="#ff0000" stroke-width="3"/><polygon points="396.6,761.5 380.2,743.4 394.8,736.9" fill="#ff0000"/><line x1="576.5" y1="774.1" x2="724" y2="857" stroke="#ff0000" stroke-width="3"/><polygon points="743.5,867.4 727.2,849.7 719.7,863" fill="#ff0000"/></svg>
<svg style="left:250px;top:407px" width="16" height="16" viewBox="0 0 16 16"><path d="M4 5 L8 1 L12 5 L12 9 L4 9 Z" fill="#fff" stroke="#a0a0a0" stroke-width="0.6" /><path d="M3 5.6 L8 0.4 L13 5.6" fill="none" stroke="#8b3a10" stroke-width="1.1" /><rect x="6.4" y="5.96" width="1.76" height="3.04" fill="#d89040" /><rect x="8.5" y="6" width="2" height="2" fill="#90c0ff" /><rect x="3" y="0.5" width="1.3" height="2.5" fill="#8b3a10" /><path d="M0.5 12 L3.5 9 L6.5 12 L6.5 15 L0.5 15 Z" fill="#fff" stroke="#a0a0a0" stroke-width="0.6" /><path d="M-0.5 12.6 L3.5 8.4 L7.5 12.6" fill="none" stroke="#8b3a10" stroke-width="1.1" /><rect x="2.3" y="12.72" width="1.32" height="2.28" fill="#d89040" /><path d="M9.5 12 L12.5 9 L15.5 12 L15.5 15 L9.5 15 Z" fill="#fff" stroke="#a0a0a0" stroke-width="0.6" /><path d="M8.5 12.6 L12.5 8.4 L16.5 12.6" fill="none" stroke="#8b3a10" stroke-width="1.1" /><rect x="11.3" y="12.72" width="1.32" height="2.28" fill="#d89040" /></svg>
<svg style="left:252px;top:509px" width="12" height="12" viewBox="0 0 12 12"><path d="M1.5 1.5 L10.5 10.5 M10.5 1.5 L1.5 10.5" fill="none" stroke="#f05028" stroke-width="1.7" stroke-linecap="round"/></svg>
<svg style="left:251px;top:716.6px" width="14" height="13" viewBox="0 0 14 13"><path d="M7 11.6 C3.5 11.6 1.2 9 1.2 6.2 C1.2 4.6 2 3.2 3.4 2.2" fill="none" stroke="#22a018" stroke-width="2" /><path d="M1 0.4 L6.3 0.4 L5.7 5.4 Z" fill="#22a018" stroke="none" stroke-width="1" /><path d="M7.2 1.1 C10.5 1.1 12.9 3.5 12.9 6.2 C12.9 8 12.2 9.4 10.8 10.4" fill="none" stroke="#22a018" stroke-width="2" /><path d="M8.1 7.2 L8.1 12.4 L13.3 12.1 Z" fill="#22a018" stroke="none" stroke-width="1" /></svg>
<svg style="left:250px;top:745px" width="17" height="16" viewBox="0 0 17 16"><defs><linearGradient id="dg" x1="0" y1="0" x2="0" y2="1"><stop offset="0" stop-color="#dcdcdc"/><stop offset="1" stop-color="#fafafa"/></linearGradient></defs><path d="M1.5 3.5 L4.5 0.5 H13 V14 H1.5 Z" fill="url(#dg)" stroke="#b4b4b4" stroke-width="1" /><path d="M4.5 0.5 V3.5 H1.5" fill="#fff" stroke="#c8c8c8" stroke-width="0.8" /><path d="M10 7.8 H13 V5.8 L16 8.8 L13 11.8 V9.8 H10 Z" fill="#1878e8" stroke="none" stroke-width="1" /></svg>
<div style="left:249px;top:762px;width:19px;height:21px;border-top:1px solid #fbfbfb;border-left:1px solid #fbfbfb;border-right:1px solid #a8a8a8;border-bottom:1px solid #a8a8a8;"></div>
<svg style="left:250px;top:766px" width="17" height="16" viewBox="0 0 17 16"><defs><linearGradient id="dg" x1="0" y1="0" x2="0" y2="1"><stop offset="0" stop-color="#dcdcdc"/><stop offset="1" stop-color="#fafafa"/></linearGradient></defs><path d="M3 3.5 L6 0.5 H14 V14 H3 Z" fill="url(#dg)" stroke="#b4b4b4" stroke-width="1" /><path d="M6 0.5 V3.5 H3" fill="#fff" stroke="#c8c8c8" stroke-width="0.8" /><path d="M0.5 8 H3.5 V6 L6.5 9 L3.5 12 V10 H0.5 Z" fill="#1878e8" stroke="none" stroke-width="1" /></svg>
</body></html>
